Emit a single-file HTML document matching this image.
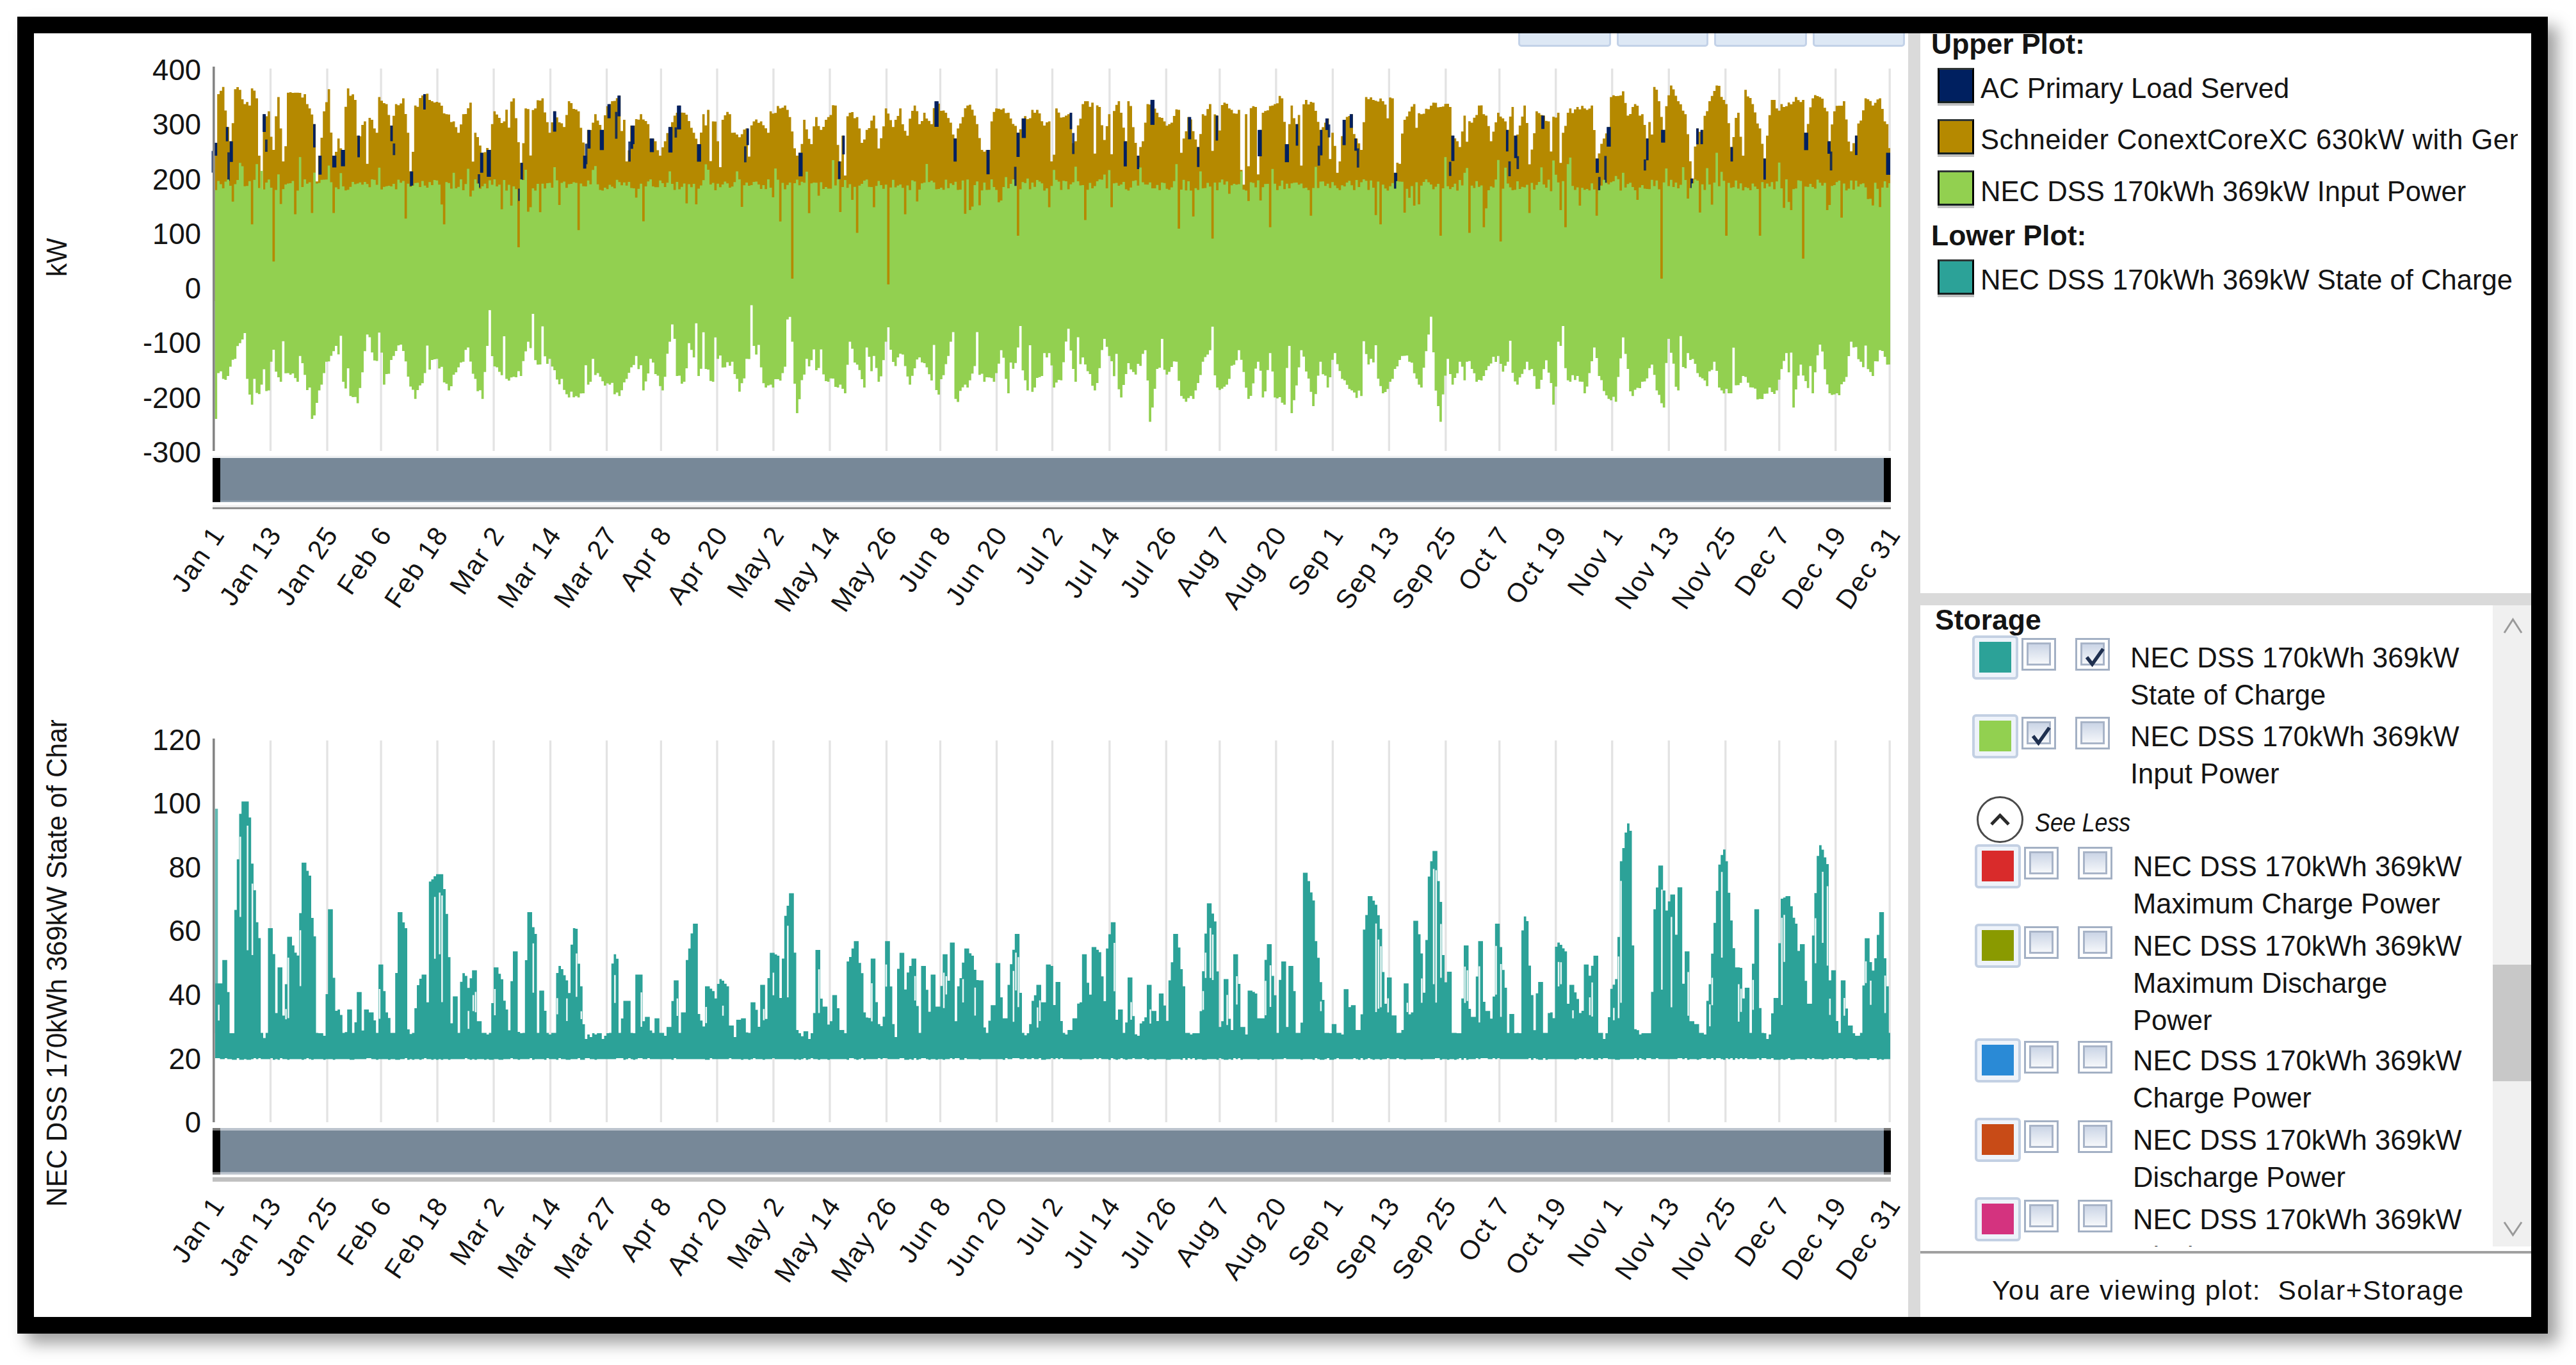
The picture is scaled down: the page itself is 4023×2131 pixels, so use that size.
<!DOCTYPE html>
<html><head><meta charset="utf-8"><style>
html,body{margin:0;padding:0;width:4023px;height:2131px;overflow:hidden;background:#fff;}
body{position:relative;font-family:"Liberation Sans", sans-serif;color:#141414;}
.frame{position:absolute;left:27px;top:26px;width:3900px;height:2004px;border:26px solid #000;background:transparent;box-shadow:15px 15px 24px rgba(0,0,0,0.38);overflow:hidden;}
.abs{position:absolute;}
.b{font-weight:bold;}
.btn{position:absolute;top:30px;height:43px;box-sizing:border-box;background:#dde8f5;border:3px solid #c3d2e8;border-radius:5px;}
.t{position:absolute;white-space:nowrap;font-size:43.6px;line-height:58px;}
.sw{position:absolute;box-sizing:border-box;width:57px;height:55px;border:3.7px solid #000;border-top-color:#2f3535;border-bottom-color:#152020;box-shadow:0 4px 0 #c0c0c0;}
.cb{position:absolute;box-sizing:border-box;width:54px;height:51px;border:3.5px solid #a3b0c4;background:#fff;}
.cb::after{content:"";position:absolute;z-index:0;left:4.5px;top:3.5px;width:32px;height:30px;border:3px solid #a8b4c8;background:linear-gradient(#cbd5e6,#f5f7fa);}
.swo{position:absolute;box-sizing:border-box;width:72px;height:69px;border:4px solid #c3d0e3;border-radius:6px;background:#eef3fa;}
.swo i{position:absolute;left:7px;top:6px;width:50px;height:48px;}
</style></head><body>
<svg width="4023" height="2131" style="position:absolute;left:0;top:0" font-family='"Liberation Sans", sans-serif'><rect x="420.9" y="107" width="3.3" height="597" fill="#e3e3e3"/><rect x="509.4" y="107" width="3.3" height="597" fill="#e3e3e3"/><rect x="593.4" y="107" width="3.3" height="597" fill="#e3e3e3"/><rect x="681.4" y="107" width="3.3" height="597" fill="#e3e3e3"/><rect x="769.4" y="107" width="3.3" height="597" fill="#e3e3e3"/><rect x="857.9" y="107" width="3.3" height="597" fill="#e3e3e3"/><rect x="945.9" y="107" width="3.3" height="597" fill="#e3e3e3"/><rect x="1030.7" y="107" width="3.3" height="597" fill="#e3e3e3"/><rect x="1118.3" y="107" width="3.3" height="597" fill="#e3e3e3"/><rect x="1206.3" y="107" width="3.3" height="597" fill="#e3e3e3"/><rect x="1294.3" y="107" width="3.3" height="597" fill="#e3e3e3"/><rect x="1382.8" y="107" width="3.3" height="597" fill="#e3e3e3"/><rect x="1466.8" y="107" width="3.3" height="597" fill="#e3e3e3"/><rect x="1554.8" y="107" width="3.3" height="597" fill="#e3e3e3"/><rect x="1641.8" y="107" width="3.3" height="597" fill="#e3e3e3"/><rect x="1731.2" y="107" width="3.3" height="597" fill="#e3e3e3"/><rect x="1819.6" y="107" width="3.3" height="597" fill="#e3e3e3"/><rect x="1903.2" y="107" width="3.3" height="597" fill="#e3e3e3"/><rect x="1991.2" y="107" width="3.3" height="597" fill="#e3e3e3"/><rect x="2079.7" y="107" width="3.3" height="597" fill="#e3e3e3"/><rect x="2167.7" y="107" width="3.3" height="597" fill="#e3e3e3"/><rect x="2256.2" y="107" width="3.3" height="597" fill="#e3e3e3"/><rect x="2340.1" y="107" width="3.3" height="597" fill="#e3e3e3"/><rect x="2428.1" y="107" width="3.3" height="597" fill="#e3e3e3"/><rect x="2516.1" y="107" width="3.3" height="597" fill="#e3e3e3"/><rect x="2604.6" y="107" width="3.3" height="597" fill="#e3e3e3"/><rect x="2693.1" y="107" width="3.3" height="597" fill="#e3e3e3"/><rect x="2777.1" y="107" width="3.3" height="597" fill="#e3e3e3"/><rect x="2865.1" y="107" width="3.3" height="597" fill="#e3e3e3"/><rect x="2949.5" y="107" width="3.3" height="597" fill="#e3e3e3"/><rect x="420.9" y="1156" width="3.3" height="596" fill="#e3e3e3"/><rect x="509.4" y="1156" width="3.3" height="596" fill="#e3e3e3"/><rect x="593.4" y="1156" width="3.3" height="596" fill="#e3e3e3"/><rect x="681.4" y="1156" width="3.3" height="596" fill="#e3e3e3"/><rect x="769.4" y="1156" width="3.3" height="596" fill="#e3e3e3"/><rect x="857.9" y="1156" width="3.3" height="596" fill="#e3e3e3"/><rect x="945.9" y="1156" width="3.3" height="596" fill="#e3e3e3"/><rect x="1030.7" y="1156" width="3.3" height="596" fill="#e3e3e3"/><rect x="1118.3" y="1156" width="3.3" height="596" fill="#e3e3e3"/><rect x="1206.3" y="1156" width="3.3" height="596" fill="#e3e3e3"/><rect x="1294.3" y="1156" width="3.3" height="596" fill="#e3e3e3"/><rect x="1382.8" y="1156" width="3.3" height="596" fill="#e3e3e3"/><rect x="1466.8" y="1156" width="3.3" height="596" fill="#e3e3e3"/><rect x="1554.8" y="1156" width="3.3" height="596" fill="#e3e3e3"/><rect x="1641.8" y="1156" width="3.3" height="596" fill="#e3e3e3"/><rect x="1731.2" y="1156" width="3.3" height="596" fill="#e3e3e3"/><rect x="1819.6" y="1156" width="3.3" height="596" fill="#e3e3e3"/><rect x="1903.2" y="1156" width="3.3" height="596" fill="#e3e3e3"/><rect x="1991.2" y="1156" width="3.3" height="596" fill="#e3e3e3"/><rect x="2079.7" y="1156" width="3.3" height="596" fill="#e3e3e3"/><rect x="2167.7" y="1156" width="3.3" height="596" fill="#e3e3e3"/><rect x="2256.2" y="1156" width="3.3" height="596" fill="#e3e3e3"/><rect x="2340.1" y="1156" width="3.3" height="596" fill="#e3e3e3"/><rect x="2428.1" y="1156" width="3.3" height="596" fill="#e3e3e3"/><rect x="2516.1" y="1156" width="3.3" height="596" fill="#e3e3e3"/><rect x="2604.6" y="1156" width="3.3" height="596" fill="#e3e3e3"/><rect x="2693.1" y="1156" width="3.3" height="596" fill="#e3e3e3"/><rect x="2777.1" y="1156" width="3.3" height="596" fill="#e3e3e3"/><rect x="2865.1" y="1156" width="3.3" height="596" fill="#e3e3e3"/><rect x="2949.5" y="1156" width="3.3" height="596" fill="#e3e3e3"/><polygon points="335.5,222.9 339.2,222.9 339.2,146.9 343.0,146.9 343.0,141.7 346.8,141.7 346.8,135.7 350.5,135.7 350.5,172.6 354.2,172.6 354.2,198.3 358.0,198.3 358.0,220.6 361.8,220.6 361.8,192.3 365.5,192.3 365.5,139.3 369.2,139.3 369.2,136.0 373.0,136.0 373.0,140.2 376.8,140.2 376.8,154.9 380.5,154.9 380.5,162.6 384.2,162.6 384.2,159.3 388.0,159.3 388.0,164.8 391.8,164.8 391.8,138.0 395.5,138.0 395.5,141.5 399.2,141.5 399.2,153.6 403.0,153.6 403.0,243.0 406.8,243.0 406.8,303.4 410.5,303.4 410.5,178.2 414.2,178.2 414.2,181.5 418.0,181.5 418.0,173.7 421.8,173.7 421.8,213.4 425.5,213.4 425.5,234.0 429.2,234.0 429.2,181.5 433.0,181.5 433.0,151.4 436.8,151.4 436.8,200.4 440.5,200.4 440.5,251.9 444.2,251.9 444.2,228.3 448.0,228.3 448.0,144.7 451.8,144.7 451.8,144.0 455.5,144.0 455.5,144.9 459.2,144.9 459.2,144.7 463.0,144.7 463.0,144.7 466.8,144.7 466.8,145.1 470.5,145.1 470.5,152.3 474.2,152.3 474.2,146.9 478.0,146.9 478.0,162.6 481.8,162.6 481.8,169.3 485.5,169.3 485.5,178.8 489.2,178.8 489.2,193.8 493.0,193.8 493.0,283.2 496.8,283.2 496.8,243.0 500.5,243.0 500.5,215.1 504.2,215.1 504.2,173.7 508.0,173.7 508.0,159.4 511.8,159.4 511.8,139.3 515.5,139.3 515.5,207.1 519.2,207.1 519.2,243.0 523.0,243.0 523.0,237.0 526.8,237.0 526.8,216.2 530.5,216.2 530.5,231.4 534.2,231.4 534.2,234.0 538.0,234.0 538.0,166.8 541.8,166.8 541.8,138.0 545.5,138.0 545.5,149.5 549.2,149.5 549.2,147.2 553.0,147.2 553.0,155.9 556.8,155.9 556.8,211.7 560.5,211.7 560.5,212.8 564.2,212.8 564.2,195.1 568.0,195.1 568.0,189.4 571.8,189.4 571.8,255.8 575.5,255.8 575.5,184.0 579.2,184.0 579.2,187.1 583.0,187.1 583.0,200.5 586.8,200.5 586.8,207.2 590.5,207.2 590.5,151.4 594.2,151.4 594.2,157.3 598.0,157.3 598.0,160.9 601.8,160.9 601.8,162.6 605.5,162.6 605.5,179.6 609.2,179.6 609.2,196.1 613.0,196.1 613.0,180.7 616.8,180.7 616.8,162.6 620.5,162.6 620.5,164.3 624.2,164.3 624.2,161.5 628.0,161.5 628.0,153.6 631.8,153.6 631.8,177.9 635.5,177.9 635.5,207.2 639.2,207.2 639.2,267.6 643.0,267.6 643.0,237.1 646.8,237.1 646.8,164.8 650.5,164.8 650.5,166.8 654.2,166.8 654.2,153.0 658.0,153.0 658.0,148.9 661.8,148.9 661.8,146.9 665.5,146.9 665.5,146.3 669.2,146.3 669.2,156.1 673.0,156.1 673.0,158.1 676.8,158.1 676.8,160.1 680.5,160.1 680.5,158.9 684.2,158.9 684.2,160.3 688.0,160.3 688.0,165.0 691.8,165.0 691.8,177.0 695.5,177.0 695.5,178.2 699.2,178.2 699.2,178.8 703.0,178.8 703.0,190.5 706.8,190.5 706.8,189.4 710.5,189.4 710.5,198.5 714.2,198.5 714.2,207.2 718.0,207.2 718.0,194.3 721.8,194.3 721.8,178.2 725.5,178.2 725.5,178.0 729.2,178.0 729.2,168.9 733.0,168.9 733.0,160.3 736.8,160.3 736.8,252.2 740.5,252.2 740.5,207.2 744.2,207.2 744.2,213.9 748.0,213.9 748.0,227.3 751.8,227.3 751.8,238.5 755.5,238.5 755.5,237.6 759.2,237.6 759.2,231.1 763.0,231.1 763.0,234.0 766.8,234.0 766.8,193.8 770.5,193.8 770.5,173.7 774.2,173.7 774.2,178.8 778.0,178.8 778.0,183.9 781.8,183.9 781.8,191.9 785.5,191.9 785.5,189.4 789.2,189.4 789.2,171.3 793.0,171.3 793.0,199.3 796.8,199.3 796.8,158.4 800.5,158.4 800.5,153.6 804.2,153.6 804.2,184.6 808.0,184.6 808.0,221.9 811.8,221.9 811.8,254.2 815.5,254.2 815.5,223.5 819.2,223.5 819.2,169.3 823.0,169.3 823.0,170.3 826.8,170.3 826.8,242.8 830.5,242.8 830.5,171.7 834.2,171.7 834.2,169.3 838.0,169.3 838.0,156.6 841.8,156.6 841.8,156.9 845.5,156.9 845.5,153.6 849.2,153.6 849.2,175.6 853.0,175.6 853.0,190.7 856.8,190.7 856.8,207.2 860.5,207.2 860.5,190.9 864.2,190.9 864.2,173.7 868.0,173.7 868.0,183.3 871.8,183.3 871.8,190.9 875.5,190.9 875.5,192.4 879.2,192.4 879.2,198.3 883.0,198.3 883.0,179.4 886.8,179.4 886.8,158.1 890.5,158.1 890.5,160.9 894.2,160.9 894.2,170.0 898.0,170.0 898.0,170.9 901.8,170.9 901.8,173.7 905.5,173.7 905.5,199.5 909.2,199.5 909.2,222.6 913.0,222.6 913.0,243.0 916.8,243.0 916.8,202.8 920.5,202.8 920.5,203.1 924.2,203.1 924.2,191.6 928.0,191.6 928.0,178.2 931.8,178.2 931.8,188.3 935.5,188.3 935.5,195.1 939.2,195.1 939.2,202.8 943.0,202.8 943.0,179.9 946.8,179.9 946.8,165.8 950.5,165.8 950.5,162.6 954.2,162.6 954.2,158.0 958.0,158.0 958.0,157.4 961.8,157.4 961.8,153.2 965.5,153.2 965.5,149.2 969.2,149.2 969.2,204.5 973.0,204.5 973.0,187.1 976.8,187.1 976.8,251.9 980.5,251.9 980.5,234.7 984.2,234.7 984.2,196.1 988.0,196.1 988.0,196.1 991.8,196.1 991.8,185.9 995.5,185.9 995.5,186.7 999.2,186.7 999.2,178.2 1003.0,178.2 1003.0,186.4 1006.8,186.4 1006.8,189.0 1010.5,189.0 1010.5,193.8 1014.2,193.8 1014.2,216.2 1018.0,216.2 1018.0,216.6 1021.8,216.6 1021.8,220.6 1025.5,220.6 1025.5,234.6 1029.2,234.6 1029.2,243.0 1033.0,243.0 1033.0,230.0 1036.8,230.0 1036.8,220.6 1040.5,220.6 1040.5,207.7 1044.2,207.7 1044.2,198.3 1048.0,198.3 1048.0,190.7 1051.8,190.7 1051.8,180.4 1055.5,180.4 1055.5,176.1 1059.2,176.1 1059.2,164.8 1063.0,164.8 1063.0,175.7 1066.8,175.7 1066.8,176.0 1070.5,176.0 1070.5,179.0 1074.2,179.0 1074.2,189.0 1078.0,189.0 1078.0,199.5 1081.8,199.5 1081.8,207.2 1085.5,207.2 1085.5,216.4 1089.2,216.4 1089.2,225.1 1093.0,225.1 1093.0,207.0 1096.8,207.0 1096.8,178.2 1100.5,178.2 1100.5,195.7 1104.2,195.7 1104.2,171.5 1108.0,171.5 1108.0,251.6 1111.8,251.6 1111.8,189.4 1115.5,189.4 1115.5,189.7 1119.2,189.7 1119.2,220.5 1123.0,220.5 1123.0,260.9 1126.8,260.9 1126.8,187.1 1130.5,187.1 1130.5,180.0 1134.2,180.0 1134.2,174.8 1138.0,174.8 1138.0,178.2 1141.8,178.2 1141.8,207.2 1145.5,207.2 1145.5,206.9 1149.2,206.9 1149.2,210.1 1153.0,210.1 1153.0,214.3 1156.8,214.3 1156.8,209.5 1160.5,209.5 1160.5,202.2 1164.2,202.2 1164.2,200.5 1168.0,200.5 1168.0,244.6 1171.8,244.6 1171.8,195.7 1175.5,195.7 1175.5,189.4 1179.2,189.4 1179.2,186.6 1183.0,186.6 1183.0,191.7 1186.8,191.7 1186.8,189.4 1190.5,189.4 1190.5,195.5 1194.2,195.5 1194.2,200.3 1198.0,200.3 1198.0,207.2 1201.8,207.2 1201.8,173.7 1205.5,173.7 1205.5,177.3 1209.2,177.3 1209.2,176.3 1213.0,176.3 1213.0,165.5 1216.8,165.5 1216.8,169.3 1220.5,169.3 1220.5,168.0 1224.2,168.0 1224.2,164.8 1228.0,164.8 1228.0,171.6 1231.8,171.6 1231.8,182.7 1235.5,182.7 1235.5,205.3 1239.2,205.3 1239.2,231.4 1243.0,231.4 1243.0,243.0 1246.8,243.0 1246.8,238.5 1250.5,238.5 1250.5,224.7 1254.2,224.7 1254.2,187.1 1258.0,187.1 1258.0,201.9 1261.8,201.9 1261.8,216.8 1265.5,216.8 1265.5,225.1 1269.2,225.1 1269.2,197.2 1273.0,197.2 1273.0,182.7 1276.8,182.7 1276.8,196.8 1280.5,196.8 1280.5,202.8 1284.2,202.8 1284.2,198.1 1288.0,198.1 1288.0,187.0 1291.8,187.0 1291.8,182.7 1295.5,182.7 1295.5,179.6 1299.2,179.6 1299.2,164.3 1303.0,164.3 1303.0,164.8 1306.8,164.8 1306.8,226.2 1310.5,226.2 1310.5,251.9 1314.2,251.9 1314.2,211.7 1318.0,211.7 1318.0,274.1 1321.8,274.1 1321.8,181.4 1325.5,181.4 1325.5,176.0 1329.2,176.0 1329.2,174.9 1333.0,174.9 1333.0,184.6 1336.8,184.6 1336.8,182.7 1340.5,182.7 1340.5,200.6 1344.2,200.6 1344.2,222.9 1348.0,222.9 1348.0,217.7 1351.8,217.7 1351.8,202.8 1355.5,202.8 1355.5,199.9 1359.2,199.9 1359.2,188.2 1363.0,188.2 1363.0,180.4 1366.8,180.4 1366.8,200.5 1370.5,200.5 1370.5,231.8 1374.2,231.8 1374.2,215.8 1378.0,215.8 1378.0,197.2 1381.8,197.2 1381.8,169.3 1385.5,169.3 1385.5,177.3 1389.2,177.3 1389.2,187.5 1393.0,187.5 1393.0,198.3 1396.8,198.3 1396.8,186.9 1400.5,186.9 1400.5,180.9 1404.2,180.9 1404.2,169.3 1408.0,169.3 1408.0,193.9 1411.8,193.9 1411.8,204.3 1415.5,204.3 1415.5,211.7 1419.2,211.7 1419.2,185.2 1423.0,185.2 1423.0,173.0 1426.8,173.0 1426.8,164.8 1430.5,164.8 1430.5,173.5 1434.2,173.5 1434.2,193.8 1438.0,193.8 1438.0,189.0 1441.8,189.0 1441.8,176.0 1445.5,176.0 1445.5,184.9 1449.2,184.9 1449.2,188.7 1453.0,188.7 1453.0,193.8 1456.8,193.8 1456.8,168.7 1460.5,168.7 1460.5,158.1 1464.2,158.1 1464.2,161.8 1468.0,161.8 1468.0,172.9 1471.8,172.9 1471.8,172.5 1475.5,172.5 1475.5,176.0 1479.2,176.0 1479.2,184.2 1483.0,184.2 1483.0,191.6 1486.8,191.6 1486.8,210.0 1490.5,210.0 1490.5,216.2 1494.2,216.2 1494.2,200.5 1498.0,200.5 1498.0,192.8 1501.8,192.8 1501.8,182.7 1505.5,182.7 1505.5,169.0 1509.2,169.0 1509.2,164.8 1513.0,164.8 1513.0,163.5 1516.8,163.5 1516.8,171.2 1520.5,171.2 1520.5,180.4 1524.2,180.4 1524.2,193.8 1528.0,193.8 1528.0,215.4 1531.8,215.4 1531.8,234.0 1535.5,234.0 1535.5,236.8 1539.2,236.8 1539.2,234.2 1543.0,234.2 1543.0,234.0 1546.8,234.0 1546.8,189.4 1550.5,189.4 1550.5,174.7 1554.2,174.7 1554.2,169.3 1558.0,169.3 1558.0,169.8 1561.8,169.8 1561.8,170.9 1565.5,170.9 1565.5,169.3 1569.2,169.3 1569.2,176.4 1573.0,176.4 1573.0,176.0 1576.8,176.0 1576.8,185.0 1580.5,185.0 1580.5,193.5 1584.2,193.5 1584.2,196.4 1588.0,196.4 1588.0,207.2 1591.8,207.2 1591.8,201.7 1595.5,201.7 1595.5,184.9 1599.2,184.9 1599.2,181.2 1603.0,181.2 1603.0,186.0 1606.8,186.0 1606.8,184.4 1610.5,184.4 1610.5,171.5 1614.2,171.5 1614.2,176.1 1618.0,176.1 1618.0,171.5 1621.8,171.5 1621.8,177.0 1625.5,177.0 1625.5,189.3 1629.2,189.3 1629.2,196.1 1633.0,196.1 1633.0,190.9 1636.8,190.9 1636.8,189.4 1640.5,189.4 1640.5,251.9 1644.2,251.9 1644.2,241.4 1648.0,241.4 1648.0,169.3 1651.8,169.3 1651.8,175.7 1655.5,175.7 1655.5,183.6 1659.2,183.6 1659.2,182.7 1663.0,182.7 1663.0,180.6 1666.8,180.6 1666.8,178.3 1670.5,178.3 1670.5,176.0 1674.2,176.0 1674.2,223.6 1678.0,223.6 1678.0,220.6 1681.8,220.6 1681.8,195.7 1685.5,195.7 1685.5,185.2 1689.2,185.2 1689.2,162.6 1693.0,162.6 1693.0,157.9 1696.8,157.9 1696.8,158.0 1700.5,158.0 1700.5,166.8 1704.2,166.8 1704.2,160.3 1708.0,160.3 1708.0,239.7 1711.8,239.7 1711.8,164.5 1715.5,164.5 1715.5,167.0 1719.2,167.0 1719.2,195.6 1723.0,195.6 1723.0,218.4 1726.8,218.4 1726.8,197.0 1730.5,197.0 1730.5,178.2 1734.2,178.2 1734.2,240.7 1738.0,240.7 1738.0,173.2 1741.8,173.2 1741.8,163.7 1745.5,163.7 1745.5,158.1 1749.2,158.1 1749.2,176.0 1753.0,176.0 1753.0,199.3 1756.8,199.3 1756.8,220.6 1760.5,220.6 1760.5,158.1 1764.2,158.1 1764.2,165.4 1768.0,165.4 1768.0,198.6 1771.8,198.6 1771.8,223.1 1775.5,223.1 1775.5,243.0 1779.2,243.0 1779.2,229.6 1783.0,229.6 1783.0,220.6 1786.8,220.6 1786.8,191.6 1790.5,191.6 1790.5,162.6 1794.2,162.6 1794.2,163.2 1798.0,163.2 1798.0,155.9 1801.8,155.9 1801.8,169.4 1805.5,169.4 1805.5,176.0 1809.2,176.0 1809.2,182.9 1813.0,182.9 1813.0,184.0 1816.8,184.0 1816.8,189.4 1820.5,189.4 1820.5,196.3 1824.2,196.3 1824.2,193.8 1828.0,193.8 1828.0,191.6 1831.8,191.6 1831.8,181.0 1835.5,181.0 1835.5,170.7 1839.2,170.7 1839.2,171.5 1843.0,171.5 1843.0,238.6 1846.8,238.6 1846.8,216.2 1850.5,216.2 1850.5,205.0 1854.2,205.0 1854.2,182.7 1858.0,182.7 1858.0,186.4 1861.8,186.4 1861.8,204.8 1865.5,204.8 1865.5,217.8 1869.2,217.8 1869.2,229.6 1873.0,229.6 1873.0,209.3 1876.8,209.3 1876.8,178.2 1880.5,178.2 1880.5,180.4 1884.2,180.4 1884.2,170.3 1888.0,170.3 1888.0,162.6 1891.8,162.6 1891.8,235.5 1895.5,235.5 1895.5,178.6 1899.2,178.6 1899.2,180.4 1903.0,180.4 1903.0,203.8 1906.8,203.8 1906.8,164.0 1910.5,164.0 1910.5,160.3 1914.2,160.3 1914.2,162.0 1918.0,162.0 1918.0,169.3 1921.8,169.3 1921.8,171.5 1925.5,171.5 1925.5,177.1 1929.2,177.1 1929.2,177.4 1933.0,177.4 1933.0,171.5 1936.8,171.5 1936.8,265.3 1940.5,265.3 1940.5,288.3 1944.2,288.3 1944.2,178.2 1948.0,178.2 1948.0,259.6 1951.8,259.6 1951.8,168.8 1955.5,168.8 1955.5,165.8 1959.2,165.8 1959.2,167.0 1963.0,167.0 1963.0,272.3 1966.8,272.3 1966.8,202.8 1970.5,202.8 1970.5,176.0 1974.2,176.0 1974.2,173.3 1978.0,173.3 1978.0,172.3 1981.8,172.3 1981.8,165.4 1985.5,165.4 1985.5,164.8 1989.2,164.8 1989.2,162.5 1993.0,162.5 1993.0,161.2 1996.8,161.2 1996.8,149.7 2000.5,149.7 2000.5,153.6 2004.2,153.6 2004.2,190.2 2008.0,190.2 2008.0,225.1 2011.8,225.1 2011.8,193.8 2015.5,193.8 2015.5,164.8 2019.2,164.8 2019.2,184.6 2023.0,184.6 2023.0,193.8 2026.8,193.8 2026.8,179.4 2030.5,179.4 2030.5,258.4 2034.2,258.4 2034.2,162.7 2038.0,162.7 2038.0,155.9 2041.8,155.9 2041.8,163.1 2045.5,163.1 2045.5,159.0 2049.2,159.0 2049.2,160.3 2053.0,160.3 2053.0,173.0 2056.8,173.0 2056.8,190.3 2060.5,190.3 2060.5,202.8 2064.2,202.8 2064.2,198.6 2068.0,198.6 2068.0,191.4 2071.8,191.4 2071.8,184.9 2075.5,184.9 2075.5,248.2 2079.2,248.2 2079.2,207.2 2083.0,207.2 2083.0,227.8 2086.8,227.8 2086.8,269.8 2090.5,269.8 2090.5,252.0 2094.2,252.0 2094.2,212.4 2098.0,212.4 2098.0,187.1 2101.8,187.1 2101.8,182.6 2105.5,182.6 2105.5,180.9 2109.2,180.9 2109.2,178.2 2113.0,178.2 2113.0,209.3 2116.8,209.3 2116.8,216.2 2120.5,216.2 2120.5,223.7 2124.2,223.7 2124.2,234.0 2128.0,234.0 2128.0,190.7 2131.8,190.7 2131.8,151.4 2135.5,151.4 2135.5,154.8 2139.2,154.8 2139.2,152.0 2143.0,152.0 2143.0,155.9 2146.8,155.9 2146.8,157.2 2150.5,157.2 2150.5,158.5 2154.2,158.5 2154.2,153.7 2158.0,153.7 2158.0,158.1 2161.8,158.1 2161.8,163.2 2165.5,163.2 2165.5,184.7 2169.2,184.7 2169.2,152.2 2173.0,152.2 2173.0,153.6 2176.8,153.6 2176.8,269.8 2180.5,269.8 2180.5,254.1 2184.2,254.1 2184.2,255.7 2188.0,255.7 2188.0,208.5 2191.8,208.5 2191.8,187.1 2195.5,187.1 2195.5,181.8 2199.2,181.8 2199.2,174.1 2203.0,174.1 2203.0,166.6 2206.8,166.6 2206.8,162.6 2210.5,162.6 2210.5,199.6 2214.2,199.6 2214.2,176.7 2218.0,176.7 2218.0,178.2 2221.8,178.2 2221.8,177.6 2225.5,177.6 2225.5,169.7 2229.2,169.7 2229.2,170.6 2233.0,170.6 2233.0,165.0 2236.8,165.0 2236.8,160.3 2240.5,160.3 2240.5,160.6 2244.2,160.6 2244.2,167.5 2248.0,167.5 2248.0,167.0 2251.8,167.0 2251.8,166.2 2255.5,166.2 2255.5,162.2 2259.2,162.2 2259.2,162.0 2263.0,162.0 2263.0,167.0 2266.8,167.0 2266.8,211.7 2270.5,211.7 2270.5,215.9 2274.2,215.9 2274.2,220.6 2278.0,220.6 2278.0,229.6 2281.8,229.6 2281.8,205.2 2285.5,205.2 2285.5,180.4 2289.2,180.4 2289.2,221.3 2293.0,221.3 2293.0,189.2 2296.8,189.2 2296.8,191.6 2300.5,191.6 2300.5,183.8 2304.2,183.8 2304.2,179.5 2308.0,179.5 2308.0,164.8 2311.8,164.8 2311.8,164.6 2315.5,164.6 2315.5,178.2 2319.2,178.2 2319.2,180.4 2323.0,180.4 2323.0,196.8 2326.8,196.8 2326.8,220.6 2330.5,220.6 2330.5,205.4 2334.2,205.4 2334.2,191.1 2338.0,191.1 2338.0,176.0 2341.8,176.0 2341.8,181.9 2345.5,181.9 2345.5,184.8 2349.2,184.8 2349.2,189.4 2353.0,189.4 2353.0,202.8 2356.8,202.8 2356.8,182.0 2360.5,182.0 2360.5,167.0 2364.2,167.0 2364.2,211.7 2368.0,211.7 2368.0,210.0 2371.8,210.0 2371.8,196.1 2375.5,196.1 2375.5,182.0 2379.2,182.0 2379.2,164.8 2383.0,164.8 2383.0,191.9 2386.8,191.9 2386.8,256.4 2390.5,256.4 2390.5,233.6 2394.2,233.6 2394.2,207.9 2398.0,207.9 2398.0,173.7 2401.8,173.7 2401.8,176.4 2405.5,176.4 2405.5,179.5 2409.2,179.5 2409.2,180.4 2413.0,180.4 2413.0,188.8 2416.8,188.8 2416.8,189.4 2420.5,189.4 2420.5,236.4 2424.2,236.4 2424.2,182.3 2428.0,182.3 2428.0,183.6 2431.8,183.6 2431.8,176.0 2435.5,176.0 2435.5,254.2 2439.2,254.2 2439.2,207.2 2443.0,207.2 2443.0,196.6 2446.8,196.6 2446.8,176.0 2450.5,176.0 2450.5,169.2 2454.2,169.2 2454.2,176.5 2458.0,176.5 2458.0,170.8 2461.8,170.8 2461.8,167.0 2465.5,167.0 2465.5,170.7 2469.2,170.7 2469.2,165.3 2473.0,165.3 2473.0,169.3 2476.8,169.3 2476.8,171.4 2480.5,171.4 2480.5,169.5 2484.2,169.5 2484.2,164.8 2488.0,164.8 2488.0,202.9 2491.8,202.9 2491.8,247.5 2495.5,247.5 2495.5,239.4 2499.2,239.4 2499.2,224.6 2503.0,224.6 2503.0,216.2 2506.8,216.2 2506.8,208.3 2510.5,208.3 2510.5,198.3 2514.2,198.3 2514.2,151.4 2518.0,151.4 2518.0,148.8 2521.8,148.8 2521.8,150.0 2525.5,150.0 2525.5,149.8 2529.2,149.8 2529.2,148.9 2533.0,148.9 2533.0,142.4 2536.8,142.4 2536.8,160.8 2540.5,160.8 2540.5,180.4 2544.2,180.4 2544.2,178.0 2548.0,178.0 2548.0,167.0 2551.8,167.0 2551.8,162.6 2555.5,162.6 2555.5,165.0 2559.2,165.0 2559.2,180.4 2563.0,180.4 2563.0,178.2 2566.8,178.2 2566.8,195.0 2570.5,195.0 2570.5,216.2 2574.2,216.2 2574.2,190.4 2578.0,190.4 2578.0,210.0 2581.8,210.0 2581.8,135.7 2585.5,135.7 2585.5,140.0 2589.2,140.0 2589.2,158.1 2593.0,158.1 2593.0,182.4 2596.8,182.4 2596.8,202.8 2600.5,202.8 2600.5,165.7 2604.2,165.7 2604.2,148.7 2608.0,148.7 2608.0,133.5 2611.8,133.5 2611.8,139.4 2615.5,139.4 2615.5,149.4 2619.2,149.4 2619.2,158.1 2623.0,158.1 2623.0,162.8 2626.8,162.8 2626.8,172.8 2630.5,172.8 2630.5,178.2 2634.2,178.2 2634.2,209.6 2638.0,209.6 2638.0,251.7 2641.8,251.7 2641.8,278.7 2645.5,278.7 2645.5,228.8 2649.2,228.8 2649.2,200.5 2653.0,200.5 2653.0,205.7 2656.8,205.7 2656.8,202.8 2660.5,202.8 2660.5,180.7 2664.2,180.7 2664.2,173.5 2668.0,173.5 2668.0,158.1 2671.8,158.1 2671.8,149.7 2675.5,149.7 2675.5,142.0 2679.2,142.0 2679.2,133.5 2683.0,133.5 2683.0,134.0 2686.8,134.0 2686.8,151.2 2690.5,151.2 2690.5,156.0 2694.2,156.0 2694.2,162.6 2698.0,162.6 2698.0,192.3 2701.8,192.3 2701.8,229.6 2705.5,229.6 2705.5,214.1 2709.2,214.1 2709.2,183.9 2713.0,183.9 2713.0,176.0 2716.8,176.0 2716.8,213.4 2720.5,213.4 2720.5,243.0 2724.2,243.0 2724.2,140.2 2728.0,140.2 2728.0,150.4 2731.8,150.4 2731.8,153.1 2735.5,153.1 2735.5,162.6 2739.2,162.6 2739.2,175.6 2743.0,175.6 2743.0,192.8 2746.8,192.8 2746.8,200.5 2750.5,200.5 2750.5,224.6 2754.2,224.6 2754.2,247.5 2758.0,247.5 2758.0,211.8 2761.8,211.8 2761.8,179.7 2765.5,179.7 2765.5,155.9 2769.2,155.9 2769.2,156.0 2773.0,156.0 2773.0,169.3 2776.8,169.3 2776.8,172.8 2780.5,172.8 2780.5,162.6 2784.2,162.6 2784.2,167.0 2788.0,167.0 2788.0,165.8 2791.8,165.8 2791.8,160.0 2795.5,160.0 2795.5,162.8 2799.2,162.8 2799.2,158.7 2803.0,158.7 2803.0,151.4 2806.8,151.4 2806.8,156.3 2810.5,156.3 2810.5,159.3 2814.2,159.3 2814.2,155.9 2818.0,155.9 2818.0,207.2 2821.8,207.2 2821.8,193.4 2825.5,193.4 2825.5,167.5 2829.2,167.5 2829.2,153.6 2833.0,153.6 2833.0,148.6 2836.8,148.6 2836.8,149.9 2840.5,149.9 2840.5,151.4 2844.2,151.4 2844.2,154.1 2848.0,154.1 2848.0,168.2 2851.8,168.2 2851.8,173.7 2855.5,173.7 2855.5,220.6 2859.2,220.6 2859.2,194.2 2863.0,194.2 2863.0,173.7 2866.8,173.7 2866.8,165.2 2870.5,165.2 2870.5,165.1 2874.2,165.1 2874.2,165.1 2878.0,165.1 2878.0,158.1 2881.8,158.1 2881.8,186.4 2885.5,186.4 2885.5,221.0 2889.2,221.0 2889.2,236.3 2893.0,236.3 2893.0,223.4 2896.8,223.4 2896.8,211.7 2900.5,211.7 2900.5,192.8 2904.2,192.8 2904.2,188.3 2908.0,188.3 2908.0,172.2 2911.8,172.2 2911.8,153.6 2915.5,153.6 2915.5,155.0 2919.2,155.0 2919.2,157.8 2923.0,157.8 2923.0,164.8 2926.8,164.8 2926.8,160.5 2930.5,160.5 2930.5,155.2 2934.2,155.2 2934.2,153.6 2938.0,153.6 2938.0,170.1 2941.8,170.1 2941.8,189.5 2945.5,189.5 2945.5,193.8 2949.2,193.8 2949.2,231.3 2952.0,231.3 2952.0,470.0 335.5,470.0" fill="#b58900"/>
<rect x="334.3" y="222.9" width="4.9" height="20.2" fill="#002060"/>
<rect x="330.5" y="235.6" width="3.8" height="33.9" fill="#002060" opacity="0.85"/>
<rect x="352.7" y="198.3" width="3.8" height="22.3" fill="#002060"/>
<rect x="358.8" y="220.6" width="4.9" height="32.2" fill="#002060"/>
<rect x="355.1" y="237.8" width="3.8" height="44.6" fill="#002060" opacity="0.85"/>
<rect x="410.2" y="178.2" width="4.9" height="27.8" fill="#002060"/>
<rect x="414.0" y="217.8" width="3.8" height="19.2" fill="#002060" opacity="0.85"/>
<rect x="489.0" y="193.8" width="3.8" height="36.4" fill="#002060"/>
<rect x="497.4" y="243.0" width="4.9" height="29.6" fill="#002060"/>
<rect x="518.9" y="243.0" width="6.4" height="18.4" fill="#002060"/>
<rect x="532.4" y="234.0" width="6.4" height="25.6" fill="#002060"/>
<rect x="558.2" y="211.7" width="3.8" height="33.8" fill="#002060"/>
<rect x="609.6" y="196.1" width="3.8" height="24.3" fill="#002060"/>
<rect x="613.4" y="224.0" width="3.8" height="18.2" fill="#002060" opacity="0.85"/>
<rect x="640.3" y="267.6" width="4.9" height="22.9" fill="#002060"/>
<rect x="644.1" y="297.9" width="3.8" height="33.3" fill="#002060" opacity="0.85"/>
<rect x="661.0" y="146.9" width="3.8" height="24.1" fill="#002060"/>
<rect x="749.8" y="238.5" width="4.9" height="31.2" fill="#002060"/>
<rect x="746.1" y="272.0" width="3.8" height="20.9" fill="#002060" opacity="0.85"/>
<rect x="760.2" y="234.0" width="6.4" height="42.0" fill="#002060"/>
<rect x="812.9" y="254.2" width="3.8" height="31.6" fill="#002060"/>
<rect x="809.2" y="294.5" width="3.8" height="19.1" fill="#002060" opacity="0.85"/>
<rect x="863.8" y="173.7" width="4.9" height="31.8" fill="#002060"/>
<rect x="910.7" y="243.0" width="4.9" height="20.2" fill="#002060"/>
<rect x="917.4" y="202.8" width="4.9" height="29.1" fill="#002060"/>
<rect x="913.6" y="224.3" width="3.8" height="32.1" fill="#002060" opacity="0.85"/>
<rect x="936.7" y="202.8" width="6.4" height="31.5" fill="#002060"/>
<rect x="948.7" y="162.6" width="4.9" height="22.0" fill="#002060"/>
<rect x="964.3" y="149.2" width="4.9" height="32.4" fill="#002060"/>
<rect x="960.5" y="174.7" width="3.8" height="41.9" fill="#002060" opacity="0.85"/>
<rect x="985.0" y="196.1" width="3.8" height="36.2" fill="#002060"/>
<rect x="981.2" y="220.9" width="3.8" height="31.4" fill="#002060" opacity="0.85"/>
<rect x="987.1" y="196.1" width="3.8" height="28.9" fill="#002060"/>
<rect x="1014.8" y="216.2" width="6.4" height="21.3" fill="#002060"/>
<rect x="1043.8" y="198.3" width="6.4" height="39.8" fill="#002060"/>
<rect x="1057.2" y="164.8" width="6.4" height="37.3" fill="#002060"/>
<rect x="1053.5" y="198.8" width="3.8" height="16.0" fill="#002060" opacity="0.85"/>
<rect x="1088.5" y="225.1" width="6.4" height="27.3" fill="#002060"/>
<rect x="1165.8" y="200.5" width="3.8" height="26.1" fill="#002060"/>
<rect x="1162.0" y="228.4" width="3.8" height="25.0" fill="#002060" opacity="0.85"/>
<rect x="1247.1" y="238.5" width="6.4" height="36.8" fill="#002060"/>
<rect x="1308.8" y="251.9" width="3.8" height="27.7" fill="#002060"/>
<rect x="1315.5" y="211.7" width="3.8" height="29.3" fill="#002060"/>
<rect x="1459.4" y="158.1" width="6.4" height="39.9" fill="#002060"/>
<rect x="1489.2" y="216.2" width="4.9" height="36.0" fill="#002060"/>
<rect x="1540.6" y="234.0" width="4.9" height="38.1" fill="#002060"/>
<rect x="1587.5" y="207.2" width="4.9" height="37.8" fill="#002060"/>
<rect x="1583.7" y="260.4" width="3.8" height="30.8" fill="#002060" opacity="0.85"/>
<rect x="1595.7" y="184.9" width="6.4" height="30.5" fill="#002060"/>
<rect x="1670.6" y="176.0" width="3.8" height="25.7" fill="#002060"/>
<rect x="1674.3" y="207.6" width="3.8" height="32.9" fill="#002060" opacity="0.85"/>
<rect x="1754.9" y="220.6" width="4.9" height="39.2" fill="#002060"/>
<rect x="1775.6" y="243.0" width="3.8" height="21.0" fill="#002060"/>
<rect x="1796.6" y="155.9" width="6.4" height="39.0" fill="#002060"/>
<rect x="1855.4" y="182.7" width="4.9" height="34.7" fill="#002060"/>
<rect x="1869.4" y="229.6" width="3.8" height="31.1" fill="#002060"/>
<rect x="1898.5" y="180.4" width="3.8" height="39.1" fill="#002060"/>
<rect x="1964.2" y="202.8" width="6.4" height="41.2" fill="#002060"/>
<rect x="2006.6" y="225.1" width="6.4" height="28.1" fill="#002060"/>
<rect x="2023.6" y="193.8" width="3.8" height="33.6" fill="#002060"/>
<rect x="2061.5" y="202.8" width="3.8" height="39.7" fill="#002060"/>
<rect x="2057.8" y="227.5" width="3.8" height="31.1" fill="#002060" opacity="0.85"/>
<rect x="2069.9" y="184.9" width="4.9" height="18.0" fill="#002060"/>
<rect x="2073.7" y="194.3" width="3.8" height="20.2" fill="#002060" opacity="0.85"/>
<rect x="2096.7" y="187.1" width="4.9" height="39.5" fill="#002060"/>
<rect x="2107.9" y="178.2" width="4.9" height="21.4" fill="#002060"/>
<rect x="2115.2" y="216.2" width="3.8" height="19.1" fill="#002060"/>
<rect x="2118.9" y="231.6" width="3.8" height="30.0" fill="#002060" opacity="0.85"/>
<rect x="2177.2" y="269.8" width="4.9" height="39.1" fill="#002060"/>
<rect x="2173.4" y="297.0" width="3.8" height="40.1" fill="#002060" opacity="0.85"/>
<rect x="2266.5" y="211.7" width="4.9" height="39.6" fill="#002060"/>
<rect x="2262.8" y="252.6" width="3.8" height="22.1" fill="#002060" opacity="0.85"/>
<rect x="2351.9" y="202.8" width="3.8" height="33.6" fill="#002060"/>
<rect x="2355.6" y="251.9" width="3.8" height="23.2" fill="#002060" opacity="0.85"/>
<rect x="2364.7" y="211.7" width="4.9" height="35.1" fill="#002060"/>
<rect x="2368.4" y="243.8" width="3.8" height="20.1" fill="#002060" opacity="0.85"/>
<rect x="2407.1" y="180.4" width="4.9" height="20.9" fill="#002060"/>
<rect x="2492.0" y="247.5" width="4.9" height="22.3" fill="#002060"/>
<rect x="2495.8" y="276.3" width="3.8" height="26.2" fill="#002060" opacity="0.85"/>
<rect x="2509.2" y="198.3" width="6.4" height="30.6" fill="#002060"/>
<rect x="2505.4" y="243.5" width="3.8" height="41.9" fill="#002060" opacity="0.85"/>
<rect x="2570.8" y="216.2" width="3.8" height="34.0" fill="#002060"/>
<rect x="2567.0" y="248.9" width="3.8" height="17.3" fill="#002060" opacity="0.85"/>
<rect x="2594.1" y="202.8" width="6.4" height="19.8" fill="#002060"/>
<rect x="2640.1" y="278.7" width="3.8" height="32.4" fill="#002060"/>
<rect x="2643.8" y="308.6" width="3.8" height="32.1" fill="#002060" opacity="0.85"/>
<rect x="2649.0" y="200.5" width="3.8" height="24.8" fill="#002060"/>
<rect x="2655.7" y="202.8" width="3.8" height="22.3" fill="#002060"/>
<rect x="2702.6" y="229.6" width="3.8" height="22.5" fill="#002060"/>
<rect x="2754.0" y="247.5" width="3.8" height="32.9" fill="#002060"/>
<rect x="2817.5" y="207.2" width="6.4" height="27.2" fill="#002060"/>
<rect x="2854.0" y="220.6" width="4.9" height="19.4" fill="#002060"/>
<rect x="2857.7" y="236.6" width="3.8" height="29.5" fill="#002060" opacity="0.85"/>
<rect x="2897.0" y="211.7" width="3.8" height="30.4" fill="#002060"/>
<rect x="2945.6" y="238.5" width="6.4" height="34.4" fill="#002060"/>
<polygon points="335.5,296.8 339.2,296.8 339.2,282.6 343.0,282.6 343.0,287.6 346.8,287.6 346.8,293.9 350.5,293.9 350.5,283.6 354.2,283.6 354.2,280.3 358.0,280.3 358.0,290.0 361.8,290.0 361.8,314.8 365.5,314.8 365.5,287.6 369.2,287.6 369.2,281.0 373.0,281.0 373.0,254.2 376.8,254.2 376.8,259.4 380.5,259.4 380.5,290.8 384.2,290.8 384.2,290.3 388.0,290.3 388.0,282.8 391.8,282.8 391.8,350.2 395.5,350.2 395.5,280.8 399.2,280.8 399.2,256.3 403.0,256.3 403.0,293.4 406.8,293.4 406.8,266.8 410.5,266.8 410.5,295.7 414.2,295.7 414.2,285.0 418.0,285.0 418.0,280.3 421.8,280.3 421.8,292.9 425.5,292.9 425.5,408.3 429.2,408.3 429.2,296.5 433.0,296.5 433.0,272.3 436.8,272.3 436.8,318.4 440.5,318.4 440.5,295.2 444.2,295.2 444.2,288.0 448.0,288.0 448.0,286.5 451.8,286.5 451.8,285.9 455.5,285.9 455.5,282.6 459.2,282.6 459.2,334.6 463.0,334.6 463.0,297.5 466.8,297.5 466.8,245.2 470.5,245.2 470.5,292.1 474.2,292.1 474.2,280.0 478.0,280.0 478.0,286.7 481.8,286.7 481.8,284.5 485.5,284.5 485.5,332.4 489.2,332.4 489.2,269.6 493.0,269.6 493.0,286.6 496.8,286.6 496.8,285.5 500.5,285.5 500.5,280.7 504.2,280.7 504.2,280.4 508.0,280.4 508.0,280.2 511.8,280.2 511.8,258.6 515.5,258.6 515.5,284.4 519.2,284.4 519.2,332.4 523.0,332.4 523.0,292.5 526.8,292.5 526.8,295.3 530.5,295.3 530.5,270.3 534.2,270.3 534.2,291.0 538.0,291.0 538.0,297.2 541.8,297.2 541.8,296.2 545.5,296.2 545.5,291.7 549.2,291.7 549.2,283.9 553.0,283.9 553.0,287.4 556.8,287.4 556.8,286.6 560.5,286.6 560.5,284.7 564.2,284.7 564.2,288.2 568.0,288.2 568.0,284.0 571.8,284.0 571.8,287.3 575.5,287.3 575.5,292.3 579.2,292.3 579.2,280.1 583.0,280.1 583.0,280.8 586.8,280.8 586.8,288.6 590.5,288.6 590.5,261.8 594.2,261.8 594.2,295.7 598.0,295.7 598.0,291.7 601.8,291.7 601.8,290.7 605.5,290.7 605.5,290.0 609.2,290.0 609.2,291.0 613.0,291.0 613.0,287.1 616.8,287.1 616.8,295.5 620.5,295.5 620.5,280.4 624.2,280.4 624.2,285.2 628.0,285.2 628.0,282.4 631.8,282.4 631.8,341.3 635.5,341.3 635.5,286.8 639.2,286.8 639.2,291.4 643.0,291.4 643.0,289.8 646.8,289.8 646.8,285.7 650.5,285.7 650.5,285.3 654.2,285.3 654.2,292.0 658.0,292.0 658.0,282.5 661.8,282.5 661.8,289.8 665.5,289.8 665.5,293.1 669.2,293.1 669.2,284.2 673.0,284.2 673.0,288.9 676.8,288.9 676.8,280.9 680.5,280.9 680.5,281.7 684.2,281.7 684.2,288.3 688.0,288.3 688.0,319.2 691.8,319.2 691.8,350.2 695.5,350.2 695.5,284.2 699.2,284.2 699.2,285.7 703.0,285.7 703.0,294.6 706.8,294.6 706.8,269.8 710.5,269.8 710.5,294.1 714.2,294.1 714.2,291.7 718.0,291.7 718.0,279.9 721.8,279.9 721.8,297.1 725.5,297.1 725.5,287.2 729.2,287.2 729.2,263.6 733.0,263.6 733.0,306.8 736.8,306.8 736.8,297.6 740.5,297.6 740.5,280.1 744.2,280.1 744.2,286.4 748.0,286.4 748.0,294.8 751.8,294.8 751.8,290.8 755.5,290.8 755.5,286.7 759.2,286.7 759.2,294.1 763.0,294.1 763.0,281.6 766.8,281.6 766.8,288.5 770.5,288.5 770.5,280.0 774.2,280.0 774.2,290.9 778.0,290.9 778.0,288.3 781.8,288.3 781.8,326.8 785.5,326.8 785.5,281.1 789.2,281.1 789.2,297.6 793.0,297.6 793.0,288.4 796.8,288.4 796.8,321.1 800.5,321.1 800.5,290.9 804.2,290.9 804.2,295.2 808.0,295.2 808.0,386.0 811.8,386.0 811.8,280.1 815.5,280.1 815.5,281.0 819.2,281.0 819.2,265.0 823.0,265.0 823.0,330.4 826.8,330.4 826.8,323.4 830.5,323.4 830.5,294.1 834.2,294.1 834.2,297.4 838.0,297.4 838.0,286.9 841.8,286.9 841.8,331.2 845.5,331.2 845.5,286.7 849.2,286.7 849.2,294.3 853.0,294.3 853.0,286.0 856.8,286.0 856.8,285.5 860.5,285.5 860.5,293.0 864.2,293.0 864.2,260.9 868.0,260.9 868.0,281.6 871.8,281.6 871.8,320.0 875.5,320.0 875.5,285.5 879.2,285.5 879.2,283.4 883.0,283.4 883.0,293.2 886.8,293.2 886.8,287.4 890.5,287.4 890.5,287.0 894.2,287.0 894.2,284.6 898.0,284.6 898.0,285.5 901.8,285.5 901.8,359.2 905.5,359.2 905.5,286.5 909.2,286.5 909.2,290.8 913.0,290.8 913.0,291.0 916.8,291.0 916.8,281.7 920.5,281.7 920.5,287.8 924.2,287.8 924.2,265.3 928.0,265.3 928.0,259.3 931.8,259.3 931.8,287.7 935.5,287.7 935.5,296.4 939.2,296.4 939.2,297.5 943.0,297.5 943.0,292.9 946.8,292.9 946.8,295.3 950.5,295.3 950.5,288.5 954.2,288.5 954.2,291.4 958.0,291.4 958.0,294.0 961.8,294.0 961.8,280.8 965.5,280.8 965.5,284.2 969.2,284.2 969.2,289.3 973.0,289.3 973.0,284.7 976.8,284.7 976.8,289.7 980.5,289.7 980.5,284.0 984.2,284.0 984.2,293.5 988.0,293.5 988.0,294.0 991.8,294.0 991.8,308.6 995.5,308.6 995.5,294.7 999.2,294.7 999.2,286.7 1003.0,286.7 1003.0,345.5 1006.8,345.5 1006.8,291.0 1010.5,291.0 1010.5,283.2 1014.2,283.2 1014.2,279.9 1018.0,279.9 1018.0,291.0 1021.8,291.0 1021.8,292.2 1025.5,292.2 1025.5,292.2 1029.2,292.2 1029.2,281.8 1033.0,281.8 1033.0,286.1 1036.8,286.1 1036.8,292.1 1040.5,292.1 1040.5,285.3 1044.2,285.3 1044.2,267.6 1048.0,267.6 1048.0,287.0 1051.8,287.0 1051.8,296.6 1055.5,296.6 1055.5,283.9 1059.2,283.9 1059.2,295.4 1063.0,295.4 1063.0,291.8 1066.8,291.8 1066.8,286.6 1070.5,286.6 1070.5,317.4 1074.2,317.4 1074.2,287.6 1078.0,287.6 1078.0,292.2 1081.8,292.2 1081.8,287.1 1085.5,287.1 1085.5,318.9 1089.2,318.9 1089.2,294.4 1093.0,294.4 1093.0,289.5 1096.8,289.5 1096.8,281.3 1100.5,281.3 1100.5,256.4 1104.2,256.4 1104.2,265.0 1108.0,265.0 1108.0,288.1 1111.8,288.1 1111.8,285.4 1115.5,285.4 1115.5,297.1 1119.2,297.1 1119.2,286.8 1123.0,286.8 1123.0,292.3 1126.8,292.3 1126.8,288.0 1130.5,288.0 1130.5,283.6 1134.2,283.6 1134.2,286.3 1138.0,286.3 1138.0,293.0 1141.8,293.0 1141.8,291.3 1145.5,291.3 1145.5,284.2 1149.2,284.2 1149.2,267.6 1153.0,267.6 1153.0,280.0 1156.8,280.0 1156.8,323.1 1160.5,323.1 1160.5,289.3 1164.2,289.3 1164.2,285.1 1168.0,285.1 1168.0,289.9 1171.8,289.9 1171.8,288.9 1175.5,288.9 1175.5,284.1 1179.2,284.1 1179.2,283.6 1183.0,283.6 1183.0,287.9 1186.8,287.9 1186.8,295.0 1190.5,295.0 1190.5,289.1 1194.2,289.1 1194.2,295.2 1198.0,295.2 1198.0,279.9 1201.8,279.9 1201.8,292.9 1205.5,292.9 1205.5,308.1 1209.2,308.1 1209.2,263.1 1213.0,263.1 1213.0,280.5 1216.8,280.5 1216.8,345.8 1220.5,345.8 1220.5,285.6 1224.2,285.6 1224.2,295.6 1228.0,295.6 1228.0,288.7 1231.8,288.7 1231.8,285.1 1235.5,285.1 1235.5,435.1 1239.2,435.1 1239.2,286.1 1243.0,286.1 1243.0,280.6 1246.8,280.6 1246.8,289.2 1250.5,289.2 1250.5,283.7 1254.2,283.7 1254.2,285.3 1258.0,285.3 1258.0,268.0 1261.8,268.0 1261.8,332.8 1265.5,332.8 1265.5,286.2 1269.2,286.2 1269.2,285.1 1273.0,285.1 1273.0,285.3 1276.8,285.3 1276.8,305.5 1280.5,305.5 1280.5,284.5 1284.2,284.5 1284.2,295.1 1288.0,295.1 1288.0,291.9 1291.8,291.9 1291.8,294.6 1295.5,294.6 1295.5,294.4 1299.2,294.4 1299.2,250.1 1303.0,250.1 1303.0,289.6 1306.8,289.6 1306.8,280.1 1310.5,280.1 1310.5,330.9 1314.2,330.9 1314.2,291.9 1318.0,291.9 1318.0,281.0 1321.8,281.0 1321.8,293.2 1325.5,293.2 1325.5,287.5 1329.2,287.5 1329.2,311.9 1333.0,311.9 1333.0,291.7 1336.8,291.7 1336.8,363.6 1340.5,363.6 1340.5,289.8 1344.2,289.8 1344.2,287.1 1348.0,287.1 1348.0,281.9 1351.8,281.9 1351.8,280.2 1355.5,280.2 1355.5,291.8 1359.2,291.8 1359.2,292.1 1363.0,292.1 1363.0,323.4 1366.8,323.4 1366.8,290.2 1370.5,290.2 1370.5,282.6 1374.2,282.6 1374.2,289.0 1378.0,289.0 1378.0,294.8 1381.8,294.8 1381.8,288.3 1385.5,288.3 1385.5,444.1 1389.2,444.1 1389.2,292.8 1393.0,292.8 1393.0,280.8 1396.8,280.8 1396.8,292.6 1400.5,292.6 1400.5,289.7 1404.2,289.7 1404.2,287.9 1408.0,287.9 1408.0,293.2 1411.8,293.2 1411.8,334.4 1415.5,334.4 1415.5,289.6 1419.2,289.6 1419.2,296.8 1423.0,296.8 1423.0,281.4 1426.8,281.4 1426.8,283.3 1430.5,283.3 1430.5,314.5 1434.2,314.5 1434.2,295.9 1438.0,295.9 1438.0,286.2 1441.8,286.2 1441.8,284.9 1445.5,284.9 1445.5,256.0 1449.2,256.0 1449.2,284.2 1453.0,284.2 1453.0,282.0 1456.8,282.0 1456.8,284.8 1460.5,284.8 1460.5,295.4 1464.2,295.4 1464.2,295.1 1468.0,295.1 1468.0,292.9 1471.8,292.9 1471.8,296.2 1475.5,296.2 1475.5,280.6 1479.2,280.6 1479.2,293.8 1483.0,293.8 1483.0,286.3 1486.8,286.3 1486.8,288.8 1490.5,288.8 1490.5,283.8 1494.2,283.8 1494.2,296.6 1498.0,296.6 1498.0,295.9 1501.8,295.9 1501.8,281.8 1505.5,281.8 1505.5,333.7 1509.2,333.7 1509.2,280.2 1513.0,280.2 1513.0,327.9 1516.8,327.9 1516.8,322.5 1520.5,322.5 1520.5,289.1 1524.2,289.1 1524.2,283.2 1528.0,283.2 1528.0,320.5 1531.8,320.5 1531.8,297.2 1535.5,297.2 1535.5,285.1 1539.2,285.1 1539.2,296.6 1543.0,296.6 1543.0,296.3 1546.8,296.3 1546.8,280.0 1550.5,280.0 1550.5,292.0 1554.2,292.0 1554.2,296.5 1558.0,296.5 1558.0,315.8 1561.8,315.8 1561.8,313.0 1565.5,313.0 1565.5,292.1 1569.2,292.1 1569.2,276.6 1573.0,276.6 1573.0,294.0 1576.8,294.0 1576.8,287.0 1580.5,287.0 1580.5,279.9 1584.2,279.9 1584.2,290.2 1588.0,290.2 1588.0,368.1 1591.8,368.1 1591.8,295.5 1595.5,295.5 1595.5,284.2 1599.2,284.2 1599.2,285.7 1603.0,285.7 1603.0,278.7 1606.8,278.7 1606.8,295.5 1610.5,295.5 1610.5,285.1 1614.2,285.1 1614.2,291.8 1618.0,291.8 1618.0,281.1 1621.8,281.1 1621.8,283.6 1625.5,283.6 1625.5,286.3 1629.2,286.3 1629.2,297.5 1633.0,297.5 1633.0,293.9 1636.8,293.9 1636.8,323.4 1640.5,323.4 1640.5,290.3 1644.2,290.3 1644.2,265.3 1648.0,265.3 1648.0,280.8 1651.8,280.8 1651.8,283.4 1655.5,283.4 1655.5,296.4 1659.2,296.4 1659.2,282.2 1663.0,282.2 1663.0,283.1 1666.8,283.1 1666.8,295.6 1670.5,295.6 1670.5,287.8 1674.2,287.8 1674.2,284.6 1678.0,284.6 1678.0,260.3 1681.8,260.3 1681.8,283.0 1685.5,283.0 1685.5,289.4 1689.2,289.4 1689.2,289.1 1693.0,289.1 1693.0,343.5 1696.8,343.5 1696.8,296.3 1700.5,296.3 1700.5,285.6 1704.2,285.6 1704.2,293.9 1708.0,293.9 1708.0,290.5 1711.8,290.5 1711.8,283.1 1715.5,283.1 1715.5,280.1 1719.2,280.1 1719.2,280.6 1723.0,280.6 1723.0,272.4 1726.8,272.4 1726.8,294.1 1730.5,294.1 1730.5,265.4 1734.2,265.4 1734.2,323.4 1738.0,323.4 1738.0,286.3 1741.8,286.3 1741.8,285.4 1745.5,285.4 1745.5,290.1 1749.2,290.1 1749.2,288.0 1753.0,288.0 1753.0,283.9 1756.8,283.9 1756.8,295.5 1760.5,295.5 1760.5,297.4 1764.2,297.4 1764.2,292.7 1768.0,292.7 1768.0,282.5 1771.8,282.5 1771.8,281.4 1775.5,281.4 1775.5,289.7 1779.2,289.7 1779.2,261.5 1783.0,261.5 1783.0,284.5 1786.8,284.5 1786.8,288.0 1790.5,288.0 1790.5,288.3 1794.2,288.3 1794.2,284.7 1798.0,284.7 1798.0,294.1 1801.8,294.1 1801.8,294.0 1805.5,294.0 1805.5,288.7 1809.2,288.7 1809.2,296.7 1813.0,296.7 1813.0,284.9 1816.8,284.9 1816.8,285.8 1820.5,285.8 1820.5,294.7 1824.2,294.7 1824.2,296.2 1828.0,296.2 1828.0,292.5 1831.8,292.5 1831.8,282.8 1835.5,282.8 1835.5,256.3 1839.2,256.3 1839.2,356.9 1843.0,356.9 1843.0,296.1 1846.8,296.1 1846.8,280.8 1850.5,280.8 1850.5,297.3 1854.2,297.3 1854.2,283.0 1858.0,283.0 1858.0,297.4 1861.8,297.4 1861.8,338.1 1865.5,338.1 1865.5,293.8 1869.2,293.8 1869.2,296.6 1873.0,296.6 1873.0,267.6 1876.8,267.6 1876.8,294.0 1880.5,294.0 1880.5,293.6 1884.2,293.6 1884.2,285.4 1888.0,285.4 1888.0,291.3 1891.8,291.3 1891.8,372.6 1895.5,372.6 1895.5,284.9 1899.2,284.9 1899.2,297.0 1903.0,297.0 1903.0,284.7 1906.8,284.7 1906.8,280.3 1910.5,280.3 1910.5,288.2 1914.2,288.2 1914.2,283.3 1918.0,283.3 1918.0,302.4 1921.8,302.4 1921.8,289.2 1925.5,289.2 1925.5,287.1 1929.2,287.1 1929.2,288.2 1933.0,288.2 1933.0,287.5 1936.8,287.5 1936.8,267.6 1940.5,267.6 1940.5,295.9 1944.2,295.9 1944.2,297.6 1948.0,297.6 1948.0,313.7 1951.8,313.7 1951.8,284.6 1955.5,284.6 1955.5,285.4 1959.2,285.4 1959.2,292.4 1963.0,292.4 1963.0,281.6 1966.8,281.6 1966.8,313.1 1970.5,313.1 1970.5,292.2 1974.2,292.2 1974.2,287.3 1978.0,287.3 1978.0,286.9 1981.8,286.9 1981.8,354.7 1985.5,354.7 1985.5,263.8 1989.2,263.8 1989.2,286.7 1993.0,286.7 1993.0,296.8 1996.8,296.8 1996.8,290.2 2000.5,290.2 2000.5,281.8 2004.2,281.8 2004.2,295.2 2008.0,295.2 2008.0,286.8 2011.8,286.8 2011.8,293.9 2015.5,293.9 2015.5,286.3 2019.2,286.3 2019.2,285.3 2023.0,285.3 2023.0,285.1 2026.8,285.1 2026.8,288.2 2030.5,288.2 2030.5,286.4 2034.2,286.4 2034.2,293.8 2038.0,293.8 2038.0,293.0 2041.8,293.0 2041.8,296.8 2045.5,296.8 2045.5,336.8 2049.2,336.8 2049.2,293.5 2053.0,293.5 2053.0,260.4 2056.8,260.4 2056.8,293.5 2060.5,293.5 2060.5,283.6 2064.2,283.6 2064.2,283.2 2068.0,283.2 2068.0,290.2 2071.8,290.2 2071.8,286.7 2075.5,286.7 2075.5,293.4 2079.2,293.4 2079.2,284.2 2083.0,284.2 2083.0,289.5 2086.8,289.5 2086.8,293.7 2090.5,293.7 2090.5,296.8 2094.2,296.8 2094.2,289.2 2098.0,289.2 2098.0,290.9 2101.8,290.9 2101.8,284.9 2105.5,284.9 2105.5,282.3 2109.2,282.3 2109.2,289.2 2113.0,289.2 2113.0,296.8 2116.8,296.8 2116.8,281.0 2120.5,281.0 2120.5,292.1 2124.2,292.1 2124.2,284.6 2128.0,284.6 2128.0,280.1 2131.8,280.1 2131.8,282.3 2135.5,282.3 2135.5,296.5 2139.2,296.5 2139.2,281.8 2143.0,281.8 2143.0,293.0 2146.8,293.0 2146.8,335.8 2150.5,335.8 2150.5,283.5 2154.2,283.5 2154.2,350.2 2158.0,350.2 2158.0,288.2 2161.8,288.2 2161.8,294.3 2165.5,294.3 2165.5,297.4 2169.2,297.4 2169.2,290.8 2173.0,290.8 2173.0,285.8 2176.8,285.8 2176.8,294.6 2180.5,294.6 2180.5,282.8 2184.2,282.8 2184.2,283.6 2188.0,283.6 2188.0,283.7 2191.8,283.7 2191.8,332.0 2195.5,332.0 2195.5,294.8 2199.2,294.8 2199.2,308.7 2203.0,308.7 2203.0,290.5 2206.8,290.5 2206.8,320.9 2210.5,320.9 2210.5,284.6 2214.2,284.6 2214.2,318.9 2218.0,318.9 2218.0,289.8 2221.8,289.8 2221.8,284.1 2225.5,284.1 2225.5,280.0 2229.2,280.0 2229.2,284.5 2233.0,284.5 2233.0,288.1 2236.8,288.1 2236.8,295.6 2240.5,295.6 2240.5,291.5 2244.2,291.5 2244.2,287.1 2248.0,287.1 2248.0,368.1 2251.8,368.1 2251.8,293.9 2255.5,293.9 2255.5,245.2 2259.2,245.2 2259.2,290.8 2263.0,290.8 2263.0,295.3 2266.8,295.3 2266.8,292.1 2270.5,292.1 2270.5,286.8 2274.2,286.8 2274.2,297.5 2278.0,297.5 2278.0,281.0 2281.8,281.0 2281.8,289.5 2285.5,289.5 2285.5,269.8 2289.2,269.8 2289.2,262.3 2293.0,262.3 2293.0,363.6 2296.8,363.6 2296.8,289.8 2300.5,289.8 2300.5,293.4 2304.2,293.4 2304.2,282.8 2308.0,282.8 2308.0,291.8 2311.8,291.8 2311.8,289.5 2315.5,289.5 2315.5,354.7 2319.2,354.7 2319.2,325.2 2323.0,325.2 2323.0,296.9 2326.8,296.9 2326.8,291.1 2330.5,291.1 2330.5,292.7 2334.2,292.7 2334.2,280.3 2338.0,280.3 2338.0,249.7 2341.8,249.7 2341.8,377.0 2345.5,377.0 2345.5,294.6 2349.2,294.6 2349.2,261.7 2353.0,261.7 2353.0,286.6 2356.8,286.6 2356.8,292.5 2360.5,292.5 2360.5,297.1 2364.2,297.1 2364.2,296.2 2368.0,296.2 2368.0,283.0 2371.8,283.0 2371.8,294.9 2375.5,294.9 2375.5,291.7 2379.2,291.7 2379.2,292.6 2383.0,292.6 2383.0,288.5 2386.8,288.5 2386.8,332.4 2390.5,332.4 2390.5,285.6 2394.2,285.6 2394.2,296.1 2398.0,296.1 2398.0,288.7 2401.8,288.7 2401.8,284.0 2405.5,284.0 2405.5,261.3 2409.2,261.3 2409.2,288.1 2413.0,288.1 2413.0,293.1 2416.8,293.1 2416.8,280.6 2420.5,280.6 2420.5,298.6 2424.2,298.6 2424.2,250.4 2428.0,250.4 2428.0,272.7 2431.8,272.7 2431.8,284.8 2435.5,284.8 2435.5,327.9 2439.2,327.9 2439.2,282.7 2443.0,282.7 2443.0,354.7 2446.8,354.7 2446.8,256.3 2450.5,256.3 2450.5,246.0 2454.2,246.0 2454.2,290.2 2458.0,290.2 2458.0,296.6 2461.8,296.6 2461.8,292.4 2465.5,292.4 2465.5,321.0 2469.2,321.0 2469.2,293.2 2473.0,293.2 2473.0,296.3 2476.8,296.3 2476.8,295.0 2480.5,295.0 2480.5,297.3 2484.2,297.3 2484.2,286.2 2488.0,286.2 2488.0,295.8 2491.8,295.8 2491.8,336.8 2495.5,336.8 2495.5,297.0 2499.2,297.0 2499.2,289.8 2503.0,289.8 2503.0,280.8 2506.8,280.8 2506.8,285.5 2510.5,285.5 2510.5,287.7 2514.2,287.7 2514.2,284.4 2518.0,284.4 2518.0,283.1 2521.8,283.1 2521.8,274.7 2525.5,274.7 2525.5,279.7 2529.2,279.7 2529.2,297.5 2533.0,297.5 2533.0,269.8 2536.8,269.8 2536.8,292.7 2540.5,292.7 2540.5,287.2 2544.2,287.2 2544.2,285.3 2548.0,285.3 2548.0,292.0 2551.8,292.0 2551.8,297.1 2555.5,297.1 2555.5,312.1 2559.2,312.1 2559.2,292.8 2563.0,292.8 2563.0,289.0 2566.8,289.0 2566.8,294.5 2570.5,294.5 2570.5,295.1 2574.2,295.1 2574.2,295.2 2578.0,295.2 2578.0,280.8 2581.8,280.8 2581.8,290.5 2585.5,290.5 2585.5,281.8 2589.2,281.8 2589.2,295.6 2593.0,295.6 2593.0,435.1 2596.8,435.1 2596.8,284.8 2600.5,284.8 2600.5,263.1 2604.2,263.1 2604.2,290.5 2608.0,290.5 2608.0,280.7 2611.8,280.7 2611.8,291.9 2615.5,291.9 2615.5,284.9 2619.2,284.9 2619.2,294.1 2623.0,294.1 2623.0,288.4 2626.8,288.4 2626.8,261.1 2630.5,261.1 2630.5,281.1 2634.2,281.1 2634.2,310.0 2638.0,310.0 2638.0,293.4 2641.8,293.4 2641.8,286.3 2645.5,286.3 2645.5,279.9 2649.2,279.9 2649.2,282.0 2653.0,282.0 2653.0,331.8 2656.8,331.8 2656.8,287.7 2660.5,287.7 2660.5,296.5 2664.2,296.5 2664.2,262.4 2668.0,262.4 2668.0,288.1 2671.8,288.1 2671.8,319.5 2675.5,319.5 2675.5,285.1 2679.2,285.1 2679.2,238.5 2683.0,238.5 2683.0,290.8 2686.8,290.8 2686.8,268.3 2690.5,268.3 2690.5,282.2 2694.2,282.2 2694.2,368.1 2698.0,368.1 2698.0,285.4 2701.8,285.4 2701.8,293.3 2705.5,293.3 2705.5,292.2 2709.2,292.2 2709.2,281.8 2713.0,281.8 2713.0,294.5 2716.8,294.5 2716.8,286.2 2720.5,286.2 2720.5,297.2 2724.2,297.2 2724.2,292.3 2728.0,292.3 2728.0,293.5 2731.8,293.5 2731.8,297.1 2735.5,297.1 2735.5,286.4 2739.2,286.4 2739.2,291.3 2743.0,291.3 2743.0,294.9 2746.8,294.9 2746.8,368.1 2750.5,368.1 2750.5,284.2 2754.2,284.2 2754.2,294.0 2758.0,294.0 2758.0,286.5 2761.8,286.5 2761.8,291.2 2765.5,291.2 2765.5,284.3 2769.2,284.3 2769.2,295.5 2773.0,295.5 2773.0,283.3 2776.8,283.3 2776.8,253.7 2780.5,253.7 2780.5,294.1 2784.2,294.1 2784.2,324.6 2788.0,324.6 2788.0,279.9 2791.8,279.9 2791.8,315.2 2795.5,315.2 2795.5,327.9 2799.2,327.9 2799.2,295.3 2803.0,295.3 2803.0,294.2 2806.8,294.2 2806.8,281.4 2810.5,281.4 2810.5,282.5 2814.2,282.5 2814.2,403.8 2818.0,403.8 2818.0,291.3 2821.8,291.3 2821.8,291.7 2825.5,291.7 2825.5,287.1 2829.2,287.1 2829.2,292.1 2833.0,292.1 2833.0,294.5 2836.8,294.5 2836.8,280.5 2840.5,280.5 2840.5,285.2 2844.2,285.2 2844.2,289.8 2848.0,289.8 2848.0,285.6 2851.8,285.6 2851.8,327.9 2855.5,327.9 2855.5,319.9 2859.2,319.9 2859.2,290.3 2863.0,290.3 2863.0,289.0 2866.8,289.0 2866.8,284.3 2870.5,284.3 2870.5,282.1 2874.2,282.1 2874.2,339.7 2878.0,339.7 2878.0,286.5 2881.8,286.5 2881.8,297.3 2885.5,297.3 2885.5,294.4 2889.2,294.4 2889.2,281.8 2893.0,281.8 2893.0,295.9 2896.8,295.9 2896.8,282.0 2900.5,282.0 2900.5,291.3 2904.2,291.3 2904.2,287.5 2908.0,287.5 2908.0,286.3 2911.8,286.3 2911.8,292.5 2915.5,292.5 2915.5,310.8 2919.2,310.8 2919.2,310.2 2923.0,310.2 2923.0,320.8 2926.8,320.8 2926.8,285.3 2930.5,285.3 2930.5,294.8 2934.2,294.8 2934.2,323.3 2938.0,323.3 2938.0,292.7 2941.8,292.7 2941.8,283.1 2945.5,283.1 2945.5,292.9 2949.2,292.9 2949.2,286.1 2952.0,286.1 2952.0,569.0 2949.2,569.0 2949.2,569.2 2945.5,569.2 2945.5,557.1 2941.8,557.1 2941.8,547.9 2938.0,547.9 2938.0,546.8 2934.2,546.8 2934.2,564.3 2930.5,564.3 2930.5,563.9 2926.8,563.9 2926.8,587.0 2923.0,587.0 2923.0,580.7 2919.2,580.7 2919.2,576.3 2915.5,576.3 2915.5,539.4 2911.8,539.4 2911.8,573.2 2908.0,573.2 2908.0,564.7 2904.2,564.7 2904.2,560.8 2900.5,560.8 2900.5,541.8 2896.8,541.8 2896.8,542.5 2893.0,542.5 2893.0,533.4 2889.2,533.4 2889.2,556.1 2885.5,556.1 2885.5,588.5 2881.8,588.5 2881.8,596.0 2878.0,596.0 2878.0,600.1 2874.2,600.1 2874.2,617.0 2870.5,617.0 2870.5,613.9 2866.8,613.9 2866.8,615.7 2863.0,615.7 2863.0,616.5 2859.2,616.5 2859.2,613.9 2855.5,613.9 2855.5,600.2 2851.8,600.2 2851.8,576.6 2848.0,576.6 2848.0,548.8 2844.2,548.8 2844.2,537.9 2840.5,537.9 2840.5,554.8 2836.8,554.8 2836.8,581.2 2833.0,581.2 2833.0,613.9 2829.2,613.9 2829.2,571.6 2825.5,571.6 2825.5,605.8 2821.8,605.8 2821.8,595.0 2818.0,595.0 2818.0,586.2 2814.2,586.2 2814.2,569.2 2810.5,569.2 2810.5,586.6 2806.8,586.6 2806.8,607.9 2803.0,607.9 2803.0,636.2 2799.2,636.2 2799.2,550.6 2795.5,550.6 2795.5,581.3 2791.8,581.3 2791.8,551.3 2788.0,551.3 2788.0,563.5 2784.2,563.5 2784.2,576.2 2780.5,576.2 2780.5,592.8 2776.8,592.8 2776.8,609.4 2773.0,609.4 2773.0,615.0 2769.2,615.0 2769.2,612.0 2765.5,612.0 2765.5,604.9 2761.8,604.9 2761.8,614.4 2758.0,614.4 2758.0,614.8 2754.2,614.8 2754.2,623.0 2750.5,623.0 2750.5,622.8 2746.8,622.8 2746.8,623.6 2743.0,623.6 2743.0,606.8 2739.2,606.8 2739.2,604.9 2735.5,604.9 2735.5,604.7 2731.8,604.7 2731.8,597.4 2728.0,597.4 2728.0,588.6 2724.2,588.6 2724.2,587.0 2720.5,587.0 2720.5,597.7 2716.8,597.7 2716.8,601.2 2713.0,601.2 2713.0,601.5 2709.2,601.5 2709.2,542.7 2705.5,542.7 2705.5,613.9 2701.8,613.9 2701.8,614.1 2698.0,614.1 2698.0,607.0 2694.2,607.0 2694.2,614.2 2690.5,614.2 2690.5,609.6 2686.8,609.6 2686.8,604.9 2683.0,604.9 2683.0,578.9 2679.2,578.9 2679.2,564.7 2675.5,564.7 2675.5,577.6 2671.8,577.6 2671.8,579.7 2668.0,579.7 2668.0,602.7 2664.2,602.7 2664.2,594.1 2660.5,594.1 2660.5,590.8 2656.8,590.8 2656.8,588.5 2653.0,588.5 2653.0,582.6 2649.2,582.6 2649.2,567.9 2645.5,567.9 2645.5,560.5 2641.8,560.5 2641.8,562.1 2638.0,562.1 2638.0,551.3 2634.2,551.3 2634.2,574.9 2630.5,574.9 2630.5,573.1 2626.8,573.1 2626.8,524.7 2623.0,524.7 2623.0,609.4 2619.2,609.4 2619.2,603.7 2615.5,603.7 2615.5,567.8 2611.8,567.8 2611.8,550.7 2608.0,550.7 2608.0,529.0 2604.2,529.0 2604.2,566.8 2600.5,566.8 2600.5,636.2 2596.8,636.2 2596.8,629.4 2593.0,629.4 2593.0,616.5 2589.2,616.5 2589.2,609.4 2585.5,609.4 2585.5,585.3 2581.8,585.3 2581.8,569.2 2578.0,569.2 2578.0,574.8 2574.2,574.8 2574.2,590.7 2570.5,590.7 2570.5,595.6 2566.8,595.6 2566.8,596.0 2563.0,596.0 2563.0,606.1 2559.2,606.1 2559.2,605.6 2555.5,605.6 2555.5,608.4 2551.8,608.4 2551.8,618.3 2548.0,618.3 2548.0,611.0 2544.2,611.0 2544.2,576.1 2540.5,576.1 2540.5,552.5 2536.8,552.5 2536.8,526.7 2533.0,526.7 2533.0,559.6 2529.2,559.6 2529.2,588.5 2525.5,588.5 2525.5,627.3 2521.8,627.3 2521.8,619.4 2518.0,619.4 2518.0,625.1 2514.2,625.1 2514.2,622.8 2510.5,622.8 2510.5,617.2 2506.8,617.2 2506.8,610.6 2503.0,610.6 2503.0,593.4 2499.2,593.4 2499.2,587.0 2495.5,587.0 2495.5,559.0 2491.8,559.0 2491.8,542.4 2488.0,542.4 2488.0,564.1 2484.2,564.1 2484.2,582.4 2480.5,582.4 2480.5,603.5 2476.8,603.5 2476.8,613.9 2473.0,613.9 2473.0,596.0 2469.2,596.0 2469.2,595.8 2465.5,595.8 2465.5,587.0 2461.8,587.0 2461.8,593.3 2458.0,593.3 2458.0,585.8 2454.2,585.8 2454.2,596.1 2450.5,596.1 2450.5,593.7 2446.8,593.7 2446.8,574.7 2443.0,574.7 2443.0,509.1 2439.2,509.1 2439.2,540.1 2435.5,540.1 2435.5,533.4 2431.8,533.4 2431.8,603.6 2428.0,603.6 2428.0,631.7 2424.2,631.7 2424.2,597.9 2420.5,597.9 2420.5,581.7 2416.8,581.7 2416.8,562.5 2413.0,562.5 2413.0,576.2 2409.2,576.2 2409.2,593.0 2405.5,593.0 2405.5,607.1 2401.8,607.1 2401.8,607.2 2398.0,607.2 2398.0,587.2 2394.2,587.2 2394.2,575.9 2390.5,575.9 2390.5,577.8 2386.8,577.8 2386.8,564.7 2383.0,564.7 2383.0,576.5 2379.2,576.5 2379.2,583.7 2375.5,583.7 2375.5,589.2 2371.8,589.2 2371.8,600.4 2368.0,600.4 2368.0,595.5 2364.2,595.5 2364.2,582.0 2360.5,582.0 2360.5,532.1 2356.8,532.1 2356.8,564.7 2353.0,564.7 2353.0,570.9 2349.2,570.9 2349.2,580.3 2345.5,580.3 2345.5,568.1 2341.8,568.1 2341.8,555.8 2338.0,555.8 2338.0,565.0 2334.2,565.0 2334.2,556.9 2330.5,556.9 2330.5,567.5 2326.8,567.5 2326.8,571.5 2323.0,571.5 2323.0,578.1 2319.2,578.1 2319.2,586.9 2315.5,586.9 2315.5,594.0 2311.8,594.0 2311.8,592.9 2308.0,592.9 2308.0,596.0 2304.2,596.0 2304.2,582.8 2300.5,582.8 2300.5,575.9 2296.8,575.9 2296.8,563.8 2293.0,563.8 2293.0,564.7 2289.2,564.7 2289.2,593.7 2285.5,593.7 2285.5,572.5 2281.8,572.5 2281.8,564.7 2278.0,564.7 2278.0,582.7 2274.2,582.7 2274.2,590.0 2270.5,590.0 2270.5,600.4 2266.8,600.4 2266.8,584.0 2263.0,584.0 2263.0,560.2 2259.2,560.2 2259.2,586.4 2255.5,586.4 2255.5,615.7 2251.8,615.7 2251.8,658.5 2248.0,658.5 2248.0,633.9 2244.2,633.9 2244.2,609.8 2240.5,609.8 2240.5,550.0 2236.8,550.0 2236.8,494.5 2233.0,494.5 2233.0,522.3 2229.2,522.3 2229.2,548.2 2225.5,548.2 2225.5,574.0 2221.8,574.0 2221.8,604.9 2218.0,604.9 2218.0,600.6 2214.2,600.6 2214.2,591.2 2210.5,591.2 2210.5,582.7 2206.8,582.7 2206.8,566.3 2203.0,566.3 2203.0,564.7 2199.2,564.7 2199.2,555.1 2195.5,555.1 2195.5,555.5 2191.8,555.5 2191.8,555.8 2188.0,555.8 2188.0,562.1 2184.2,562.1 2184.2,571.9 2180.5,571.9 2180.5,575.9 2176.8,575.9 2176.8,591.5 2173.0,591.5 2173.0,596.1 2169.2,596.1 2169.2,607.2 2165.5,607.2 2165.5,612.1 2161.8,612.1 2161.8,613.9 2158.0,613.9 2158.0,602.8 2154.2,602.8 2154.2,591.3 2150.5,591.3 2150.5,538.9 2146.8,538.9 2146.8,565.7 2143.0,565.7 2143.0,560.2 2139.2,560.2 2139.2,568.9 2135.5,568.9 2135.5,552.8 2131.8,552.8 2131.8,532.8 2128.0,532.8 2128.0,618.3 2124.2,618.3 2124.2,609.7 2120.5,609.7 2120.5,621.3 2116.8,621.3 2116.8,612.7 2113.0,612.7 2113.0,609.4 2109.2,609.4 2109.2,607.2 2105.5,607.2 2105.5,600.7 2101.8,600.7 2101.8,593.7 2098.0,593.7 2098.0,591.5 2094.2,591.5 2094.2,579.2 2090.5,579.2 2090.5,568.6 2086.8,568.6 2086.8,551.3 2083.0,551.3 2083.0,561.8 2079.2,561.8 2079.2,589.0 2075.5,589.0 2075.5,604.9 2071.8,604.9 2071.8,586.6 2068.0,586.6 2068.0,584.2 2064.2,584.2 2064.2,564.7 2060.5,564.7 2060.5,586.5 2056.8,586.5 2056.8,615.3 2053.0,615.3 2053.0,634.0 2049.2,634.0 2049.2,611.8 2045.5,611.8 2045.5,591.1 2041.8,591.1 2041.8,580.1 2038.0,580.1 2038.0,556.8 2034.2,556.8 2034.2,546.8 2030.5,546.8 2030.5,573.4 2026.8,573.4 2026.8,601.7 2023.0,601.7 2023.0,624.8 2019.2,624.8 2019.2,645.1 2015.5,645.1 2015.5,540.1 2011.8,540.1 2011.8,574.4 2008.0,574.4 2008.0,631.7 2004.2,631.7 2004.2,628.8 2000.5,628.8 2000.5,620.0 1996.8,620.0 1996.8,622.1 1993.0,622.1 1993.0,620.6 1989.2,620.6 1989.2,579.9 1985.5,579.9 1985.5,551.3 1981.8,551.3 1981.8,577.7 1978.0,577.7 1978.0,611.1 1974.2,611.1 1974.2,620.6 1970.5,620.6 1970.5,578.7 1966.8,578.7 1966.8,564.7 1963.0,564.7 1963.0,575.4 1959.2,575.4 1959.2,598.5 1955.5,598.5 1955.5,617.9 1951.8,617.9 1951.8,622.8 1948.0,622.8 1948.0,605.2 1944.2,605.2 1944.2,580.8 1940.5,580.8 1940.5,561.8 1936.8,561.8 1936.8,546.8 1933.0,546.8 1933.0,562.5 1929.2,562.5 1929.2,569.5 1925.5,569.5 1925.5,570.9 1921.8,570.9 1921.8,591.4 1918.0,591.4 1918.0,600.4 1914.2,600.4 1914.2,603.8 1910.5,603.8 1910.5,606.8 1906.8,606.8 1906.8,608.7 1903.0,608.7 1903.0,604.9 1899.2,604.9 1899.2,585.9 1895.5,585.9 1895.5,510.0 1891.8,510.0 1891.8,546.8 1888.0,546.8 1888.0,553.6 1884.2,553.6 1884.2,557.6 1880.5,557.6 1880.5,564.7 1876.8,564.7 1876.8,585.5 1873.0,585.5 1873.0,598.0 1869.2,598.0 1869.2,609.6 1865.5,609.6 1865.5,622.8 1861.8,622.8 1861.8,618.2 1858.0,618.2 1858.0,621.5 1854.2,621.5 1854.2,627.3 1850.5,627.3 1850.5,622.5 1846.8,622.5 1846.8,618.3 1843.0,618.3 1843.0,594.5 1839.2,594.5 1839.2,564.7 1835.5,564.7 1835.5,564.3 1831.8,564.3 1831.8,572.9 1828.0,572.9 1828.0,580.4 1824.2,580.4 1824.2,584.8 1820.5,584.8 1820.5,577.2 1816.8,577.2 1816.8,528.9 1813.0,528.9 1813.0,573.9 1809.2,573.9 1809.2,575.9 1805.5,575.9 1805.5,607.0 1801.8,607.0 1801.8,636.3 1798.0,636.3 1798.0,658.5 1794.2,658.5 1794.2,594.0 1790.5,594.0 1790.5,546.8 1786.8,546.8 1786.8,552.6 1783.0,552.6 1783.0,571.2 1779.2,571.2 1779.2,568.1 1775.5,568.1 1775.5,584.8 1771.8,584.8 1771.8,580.7 1768.0,580.7 1768.0,576.7 1764.2,576.7 1764.2,566.9 1760.5,566.9 1760.5,583.9 1756.8,583.9 1756.8,601.0 1753.0,601.0 1753.0,620.6 1749.2,620.6 1749.2,607.7 1745.5,607.7 1745.5,552.4 1741.8,552.4 1741.8,587.3 1738.0,587.3 1738.0,563.9 1734.2,563.9 1734.2,555.8 1730.5,555.8 1730.5,541.4 1726.8,541.4 1726.8,529.0 1723.0,529.0 1723.0,546.5 1719.2,546.5 1719.2,574.7 1715.5,574.7 1715.5,597.9 1711.8,597.9 1711.8,609.4 1708.0,609.4 1708.0,602.3 1704.2,602.3 1704.2,584.0 1700.5,584.0 1700.5,579.5 1696.8,579.5 1696.8,569.1 1693.0,569.1 1693.0,558.0 1689.2,558.0 1689.2,568.5 1685.5,568.5 1685.5,526.6 1681.8,526.6 1681.8,596.0 1678.0,596.0 1678.0,575.9 1674.2,575.9 1674.2,547.2 1670.5,547.2 1670.5,513.3 1666.8,513.3 1666.8,533.2 1663.0,533.2 1663.0,565.5 1659.2,565.5 1659.2,593.7 1655.5,593.7 1655.5,593.1 1651.8,593.1 1651.8,597.3 1648.0,597.3 1648.0,604.9 1644.2,604.9 1644.2,570.6 1640.5,570.6 1640.5,551.3 1636.8,551.3 1636.8,557.9 1633.0,557.9 1633.0,551.3 1629.2,551.3 1629.2,587.0 1625.5,587.0 1625.5,588.7 1621.8,588.7 1621.8,590.0 1618.0,590.0 1618.0,604.9 1614.2,604.9 1614.2,611.7 1610.5,611.7 1610.5,539.1 1606.8,539.1 1606.8,609.4 1603.0,609.4 1603.0,593.7 1599.2,593.7 1599.2,578.2 1595.5,578.2 1595.5,509.1 1591.8,509.1 1591.8,542.4 1588.0,542.4 1588.0,566.8 1584.2,566.8 1584.2,575.8 1580.5,575.8 1580.5,566.1 1576.8,566.1 1576.8,613.9 1573.0,613.9 1573.0,591.5 1569.2,591.5 1569.2,558.5 1565.5,558.5 1565.5,546.8 1561.8,546.8 1561.8,567.7 1558.0,567.7 1558.0,582.4 1554.2,582.4 1554.2,596.0 1550.5,596.0 1550.5,590.2 1546.8,590.2 1546.8,589.2 1543.0,589.2 1543.0,589.0 1539.2,589.0 1539.2,596.0 1535.5,596.0 1535.5,583.6 1531.8,583.6 1531.8,585.2 1528.0,585.2 1528.0,518.5 1524.2,518.5 1524.2,571.4 1520.5,571.4 1520.5,583.2 1516.8,583.2 1516.8,593.8 1513.0,593.8 1513.0,604.9 1509.2,604.9 1509.2,600.6 1505.5,600.6 1505.5,604.7 1501.8,604.7 1501.8,610.2 1498.0,610.2 1498.0,627.4 1494.2,627.4 1494.2,622.8 1490.5,622.8 1490.5,518.6 1486.8,518.6 1486.8,533.4 1483.0,533.4 1483.0,555.8 1479.2,555.8 1479.2,568.5 1475.5,568.5 1475.5,585.7 1471.8,585.7 1471.8,591.9 1468.0,591.9 1468.0,616.1 1464.2,616.1 1464.2,609.1 1460.5,609.1 1460.5,538.6 1456.8,538.6 1456.8,594.0 1453.0,594.0 1453.0,584.3 1449.2,584.3 1449.2,573.6 1445.5,573.6 1445.5,567.0 1441.8,567.0 1441.8,565.7 1438.0,565.7 1438.0,558.0 1434.2,558.0 1434.2,561.2 1430.5,561.2 1430.5,574.9 1426.8,574.9 1426.8,586.7 1423.0,586.7 1423.0,600.4 1419.2,600.4 1419.2,587.8 1415.5,587.8 1415.5,571.4 1411.8,571.4 1411.8,553.5 1408.0,553.5 1408.0,552.2 1404.2,552.2 1404.2,557.9 1400.5,557.9 1400.5,571.4 1396.8,571.4 1396.8,564.9 1393.0,564.9 1393.0,545.9 1389.2,545.9 1389.2,510.9 1385.5,510.9 1385.5,533.4 1381.8,533.4 1381.8,562.3 1378.0,562.3 1378.0,587.4 1374.2,587.4 1374.2,596.0 1370.5,596.0 1370.5,574.6 1366.8,574.6 1366.8,555.8 1363.0,555.8 1363.0,579.6 1359.2,579.6 1359.2,557.1 1355.5,557.1 1355.5,542.4 1351.8,542.4 1351.8,604.9 1348.0,604.9 1348.0,592.0 1344.2,592.0 1344.2,577.8 1340.5,577.8 1340.5,569.2 1336.8,569.2 1336.8,566.0 1333.0,566.0 1333.0,544.4 1329.2,544.4 1329.2,533.4 1325.5,533.4 1325.5,569.6 1321.8,569.6 1321.8,613.9 1318.0,613.9 1318.0,606.9 1314.2,606.9 1314.2,600.4 1310.5,600.4 1310.5,605.1 1306.8,605.1 1306.8,603.9 1303.0,603.9 1303.0,591.0 1299.2,591.0 1299.2,590.7 1295.5,590.7 1295.5,596.0 1291.8,596.0 1291.8,594.9 1288.0,594.9 1288.0,584.6 1284.2,584.6 1284.2,545.4 1280.5,545.4 1280.5,574.5 1276.8,574.5 1276.8,578.1 1273.0,578.1 1273.0,545.6 1269.2,545.6 1269.2,562.3 1265.5,562.3 1265.5,572.0 1261.8,572.0 1261.8,560.2 1258.0,560.2 1258.0,584.8 1254.2,584.8 1254.2,593.6 1250.5,593.6 1250.5,623.3 1246.8,623.3 1246.8,645.1 1243.0,645.1 1243.0,599.1 1239.2,599.1 1239.2,533.4 1235.5,533.4 1235.5,494.7 1231.8,494.7 1231.8,498.8 1228.0,498.8 1228.0,572.6 1224.2,572.6 1224.2,582.6 1220.5,582.6 1220.5,594.2 1216.8,594.2 1216.8,592.0 1213.0,592.0 1213.0,592.0 1209.2,592.0 1209.2,604.9 1205.5,604.9 1205.5,600.5 1201.8,600.5 1201.8,601.7 1198.0,601.7 1198.0,604.9 1194.2,604.9 1194.2,598.2 1190.5,598.2 1190.5,573.5 1186.8,573.5 1186.8,538.4 1183.0,538.4 1183.0,553.6 1179.2,553.6 1179.2,540.1 1175.5,540.1 1175.5,476.4 1171.8,476.4 1171.8,560.6 1168.0,560.6 1168.0,560.2 1164.2,560.2 1164.2,590.8 1160.5,590.8 1160.5,598.2 1156.8,598.2 1156.8,611.6 1153.0,611.6 1153.0,591.4 1149.2,591.4 1149.2,584.0 1145.5,584.0 1145.5,564.7 1141.8,564.7 1141.8,571.1 1138.0,571.1 1138.0,565.5 1134.2,565.5 1134.2,573.6 1130.5,573.6 1130.5,573.8 1126.8,573.8 1126.8,555.1 1123.0,555.1 1123.0,560.2 1119.2,560.2 1119.2,526.8 1115.5,526.8 1115.5,596.0 1111.8,596.0 1111.8,594.8 1108.0,594.8 1108.0,577.1 1104.2,577.1 1104.2,575.9 1100.5,575.9 1100.5,518.7 1096.8,518.7 1096.8,575.7 1093.0,575.7 1093.0,587.0 1089.2,587.0 1089.2,504.8 1085.5,504.8 1085.5,558.1 1081.8,558.1 1081.8,546.3 1078.0,546.3 1078.0,535.7 1074.2,535.7 1074.2,575.1 1070.5,575.1 1070.5,596.0 1066.8,596.0 1066.8,598.9 1063.0,598.9 1063.0,586.5 1059.2,586.5 1059.2,587.0 1055.5,587.0 1055.5,529.0 1051.8,529.0 1051.8,506.6 1048.0,506.6 1048.0,533.6 1044.2,533.6 1044.2,552.2 1040.5,552.2 1040.5,588.3 1036.8,588.3 1036.8,609.4 1033.0,609.4 1033.0,602.7 1029.2,602.7 1029.2,586.4 1025.5,586.4 1025.5,583.9 1021.8,583.9 1021.8,566.1 1018.0,566.1 1018.0,560.2 1014.2,560.2 1014.2,582.9 1010.5,582.9 1010.5,595.5 1006.8,595.5 1006.8,609.4 1003.0,609.4 1003.0,570.2 999.2,570.2 999.2,576.3 995.5,576.3 995.5,555.8 991.8,555.8 991.8,569.7 988.0,569.7 988.0,573.6 984.2,573.6 984.2,581.9 980.5,581.9 980.5,591.5 976.8,591.5 976.8,597.0 973.0,597.0 973.0,609.3 969.2,609.3 969.2,618.3 965.5,618.3 965.5,612.8 961.8,612.8 961.8,615.6 958.0,615.6 958.0,597.7 954.2,597.7 954.2,600.4 950.5,600.4 950.5,598.5 946.8,598.5 946.8,601.9 943.0,601.9 943.0,595.3 939.2,595.3 939.2,588.3 935.5,588.3 935.5,582.6 931.8,582.6 931.8,585.6 928.0,585.6 928.0,560.3 924.2,560.3 924.2,596.1 920.5,596.1 920.5,600.6 916.8,600.6 916.8,570.3 913.0,570.3 913.0,613.9 909.2,613.9 909.2,614.3 905.5,614.3 905.5,620.4 901.8,620.4 901.8,618.6 898.0,618.6 898.0,620.3 894.2,620.3 894.2,611.5 890.5,611.5 890.5,620.6 886.8,620.6 886.8,615.4 883.0,615.4 883.0,608.7 879.2,608.7 879.2,591.6 875.5,591.6 875.5,600.1 871.8,600.1 871.8,592.5 868.0,592.5 868.0,578.1 864.2,578.1 864.2,572.2 860.5,572.2 860.5,560.2 856.8,560.2 856.8,568.0 853.0,568.0 853.0,556.2 849.2,556.2 849.2,509.4 845.5,509.4 845.5,568.9 841.8,568.9 841.8,569.2 838.0,569.2 838.0,562.2 834.2,562.2 834.2,489.9 830.5,489.9 830.5,543.6 826.8,543.6 826.8,533.4 823.0,533.4 823.0,548.4 819.2,548.4 819.2,563.8 815.5,563.8 815.5,587.0 811.8,587.0 811.8,579.6 808.0,579.6 808.0,589.1 804.2,589.1 804.2,588.3 800.5,588.3 800.5,589.2 796.8,589.2 796.8,594.2 793.0,594.2 793.0,591.5 789.2,591.5 789.2,524.9 785.5,524.9 785.5,585.8 781.8,585.8 781.8,580.5 778.0,580.5 778.0,573.6 774.2,573.6 774.2,571.9 770.5,571.9 770.5,555.9 766.8,555.9 766.8,484.2 763.0,484.2 763.0,540.1 759.2,540.1 759.2,580.8 755.5,580.8 755.5,622.8 751.8,622.8 751.8,609.3 748.0,609.3 748.0,610.8 744.2,610.8 744.2,591.5 740.5,591.5 740.5,583.5 736.8,583.5 736.8,564.6 733.0,564.6 733.0,542.4 729.2,542.4 729.2,546.3 725.5,546.3 725.5,564.8 721.8,564.8 721.8,566.1 718.0,566.1 718.0,573.6 714.2,573.6 714.2,581.3 710.5,581.3 710.5,585.0 706.8,585.0 706.8,603.0 703.0,603.0 703.0,609.4 699.2,609.4 699.2,599.3 695.5,599.3 695.5,597.0 691.8,597.0 691.8,572.8 688.0,572.8 688.0,575.2 684.2,575.2 684.2,560.2 680.5,560.2 680.5,561.0 676.8,561.0 676.8,561.9 673.0,561.9 673.0,577.1 669.2,577.1 669.2,539.4 665.5,539.4 665.5,582.6 661.8,582.6 661.8,598.2 658.0,598.2 658.0,601.7 654.2,601.7 654.2,609.0 650.5,609.0 650.5,622.8 646.8,622.8 646.8,608.4 643.0,608.4 643.0,603.5 639.2,603.5 639.2,588.1 635.5,588.1 635.5,564.2 631.8,564.2 631.8,548.0 628.0,548.0 628.0,537.9 624.2,537.9 624.2,539.3 620.5,539.3 620.5,547.9 616.8,547.9 616.8,555.8 613.0,555.8 613.0,561.9 609.2,561.9 609.2,583.4 605.5,583.4 605.5,584.0 601.8,584.0 601.8,600.4 598.0,600.4 598.0,550.6 594.2,550.6 594.2,519.2 590.5,519.2 590.5,563.6 586.8,563.6 586.8,562.8 583.0,562.8 583.0,550.2 579.2,550.2 579.2,526.6 575.5,526.6 575.5,522.3 571.8,522.3 571.8,548.3 568.0,548.3 568.0,581.2 564.2,581.2 564.2,605.7 560.5,605.7 560.5,629.5 556.8,629.5 556.8,619.8 553.0,619.8 553.0,620.0 549.2,620.0 549.2,618.3 545.5,618.3 545.5,574.9 541.8,574.9 541.8,606.5 538.0,606.5 538.0,596.0 534.2,596.0 534.2,524.3 530.5,524.3 530.5,553.2 526.8,553.2 526.8,540.1 523.0,540.1 523.0,548.2 519.2,548.2 519.2,555.6 515.5,555.6 515.5,564.3 511.8,564.3 511.8,564.7 508.0,564.7 508.0,582.4 504.2,582.4 504.2,600.5 500.5,600.5 500.5,609.4 496.8,609.4 496.8,629.0 493.0,629.0 493.0,648.6 489.2,648.6 489.2,654.1 485.5,654.1 485.5,605.0 481.8,605.0 481.8,609.1 478.0,609.1 478.0,585.3 474.2,585.3 474.2,567.1 470.5,567.1 470.5,555.8 466.8,555.8 466.8,596.0 463.0,596.0 463.0,590.2 459.2,590.2 459.2,583.1 455.5,583.1 455.5,585.1 451.8,585.1 451.8,582.6 448.0,582.6 448.0,582.7 444.2,582.7 444.2,532.8 440.5,532.8 440.5,596.0 436.8,596.0 436.8,588.9 433.0,588.9 433.0,580.3 429.2,580.3 429.2,546.1 425.5,546.1 425.5,564.7 421.8,564.7 421.8,609.4 418.0,609.4 418.0,610.5 414.2,610.5 414.2,576.6 410.5,576.6 410.5,600.4 406.8,600.4 406.8,615.3 403.0,615.3 403.0,613.6 399.2,613.6 399.2,591.6 395.5,591.6 395.5,631.7 391.8,631.7 391.8,616.0 388.0,616.0 388.0,591.5 384.2,591.5 384.2,520.0 380.5,520.0 380.5,530.0 376.8,530.0 376.8,535.8 373.0,535.8 373.0,540.3 369.2,540.3 369.2,560.2 365.5,560.2 365.5,561.8 361.8,561.8 361.8,572.6 358.0,572.6 358.0,587.0 354.2,587.0 354.2,593.1 350.5,593.1 350.5,591.4 346.8,591.4 346.8,579.8 343.0,579.8 343.0,582.6 339.2,582.6 339.2,654.1 335.5,654.1" fill="#92d050"/>
<polygon points="336.0,1535.2 339.8,1535.2 339.8,1535.2 343.5,1535.2 343.5,1535.2 347.2,1535.2 347.2,1498.8 351.0,1498.8 351.0,1498.8 354.8,1498.8 354.8,1548.7 358.5,1548.7 358.5,1613.0 362.2,1613.0 362.2,1613.0 366.0,1613.0 366.0,1420.4 369.8,1420.4 369.8,1341.4 373.5,1341.4 373.5,1270.5 377.2,1270.5 377.2,1251.3 381.0,1251.3 381.0,1251.3 384.8,1251.3 384.8,1251.3 388.5,1251.3 388.5,1276.3 392.2,1276.3 392.2,1348.2 396.0,1348.2 396.0,1389.8 399.8,1389.8 399.8,1439.8 403.5,1439.8 403.5,1464.4 407.2,1464.4 407.2,1612.4 411.0,1612.4 411.0,1620.5 414.8,1620.5 414.8,1612.4 418.5,1612.4 418.5,1448.9 422.2,1448.9 422.2,1448.9 426.0,1448.9 426.0,1489.5 429.8,1489.5 429.8,1581.6 433.5,1581.6 433.5,1510.2 437.2,1510.2 437.2,1510.2 441.0,1510.2 441.0,1585.5 444.8,1585.5 444.8,1536.6 448.5,1536.6 448.5,1462.5 452.2,1462.5 452.2,1462.5 456.0,1462.5 456.0,1475.9 459.8,1475.9 459.8,1487.2 463.5,1487.2 463.5,1491.7 467.2,1491.7 467.2,1425.5 471.0,1425.5 471.0,1346.7 474.8,1346.7 474.8,1346.7 478.5,1346.7 478.5,1359.5 482.2,1359.5 482.2,1367.1 486.0,1367.1 486.0,1433.1 489.8,1433.1 489.8,1461.8 493.5,1461.8 493.5,1612.4 497.2,1612.4 497.2,1613.0 501.0,1613.0 501.0,1613.0 504.8,1613.0 504.8,1617.0 508.5,1617.0 508.5,1552.0 512.2,1552.0 512.2,1419.4 516.0,1419.4 516.0,1419.4 519.8,1419.4 519.8,1526.4 523.5,1526.4 523.5,1577.9 527.2,1577.9 527.2,1576.1 531.0,1576.1 531.0,1584.4 534.8,1584.4 534.8,1612.4 538.5,1612.4 538.5,1611.2 542.2,1611.2 542.2,1576.1 546.0,1576.1 546.0,1576.1 549.8,1576.1 549.8,1612.4 553.5,1612.4 553.5,1596.0 557.2,1596.0 557.2,1548.8 561.0,1548.8 561.0,1548.8 564.8,1548.8 564.8,1608.8 568.5,1608.8 568.5,1576.1 572.2,1576.1 572.2,1576.1 576.0,1576.1 576.0,1580.6 579.8,1580.6 579.8,1580.6 583.5,1580.6 583.5,1593.0 587.2,1593.0 587.2,1612.4 591.0,1612.4 591.0,1505.7 594.8,1505.7 594.8,1505.7 598.5,1505.7 598.5,1547.2 602.2,1547.2 602.2,1580.6 606.0,1580.6 606.0,1589.3 609.8,1589.3 609.8,1612.4 613.5,1612.4 613.5,1612.4 617.2,1612.4 617.2,1518.9 621.0,1518.9 621.0,1423.9 624.8,1423.9 624.8,1423.9 628.5,1423.9 628.5,1439.9 632.2,1439.9 632.2,1448.9 636.0,1448.9 636.0,1607.1 639.8,1607.1 639.8,1614.2 643.5,1614.2 643.5,1612.4 647.2,1612.4 647.2,1573.9 651.0,1573.9 651.0,1537.9 654.8,1537.9 654.8,1527.9 658.5,1527.9 658.5,1521.6 662.2,1521.6 662.2,1521.6 666.0,1521.6 666.0,1564.7 669.8,1564.7 669.8,1376.2 673.5,1376.2 673.5,1372.8 677.2,1372.8 677.2,1368.1 681.0,1368.1 681.0,1364.8 684.8,1364.8 684.8,1364.8 688.5,1364.8 688.5,1364.8 692.2,1364.8 692.2,1388.1 696.0,1388.1 696.0,1426.8 699.8,1426.8 699.8,1494.2 703.5,1494.2 703.5,1597.4 707.2,1597.4 707.2,1555.6 711.0,1555.6 711.0,1555.6 714.8,1555.6 714.8,1612.4 718.5,1612.4 718.5,1532.7 722.2,1532.7 722.2,1519.3 726.0,1519.3 726.0,1523.4 729.8,1523.4 729.8,1542.2 733.5,1542.2 733.5,1527.2 737.2,1527.2 737.2,1514.7 741.0,1514.7 741.0,1514.7 744.8,1514.7 744.8,1594.2 748.5,1594.2 748.5,1594.2 752.2,1594.2 752.2,1612.4 756.0,1612.4 756.0,1612.4 759.8,1612.4 759.8,1615.0 763.5,1615.0 763.5,1612.4 767.2,1612.4 767.2,1566.0 771.0,1566.0 771.0,1510.2 774.8,1510.2 774.8,1510.2 778.5,1510.2 778.5,1520.2 782.2,1520.2 782.2,1528.7 786.0,1528.7 786.0,1562.2 789.8,1562.2 789.8,1576.1 793.5,1576.1 793.5,1608.6 797.2,1608.6 797.2,1531.7 801.0,1531.7 801.0,1485.2 804.8,1485.2 804.8,1485.2 808.5,1485.2 808.5,1611.0 812.2,1611.0 812.2,1613.1 816.0,1613.1 816.0,1612.4 819.8,1612.4 819.8,1498.9 823.5,1498.9 823.5,1423.9 827.2,1423.9 827.2,1423.9 831.0,1423.9 831.0,1447.5 834.8,1447.5 834.8,1458.0 838.5,1458.0 838.5,1612.4 842.2,1612.4 842.2,1546.5 846.0,1546.5 846.0,1546.5 849.8,1546.5 849.8,1578.0 853.5,1578.0 853.5,1612.4 857.2,1612.4 857.2,1615.0 861.0,1615.0 861.0,1612.4 864.8,1612.4 864.8,1612.4 868.5,1612.4 868.5,1518.9 872.2,1518.9 872.2,1507.9 876.0,1507.9 876.0,1513.0 879.8,1513.0 879.8,1522.4 883.5,1522.4 883.5,1530.6 887.2,1530.6 887.2,1550.2 891.0,1550.2 891.0,1474.7 894.8,1474.7 894.8,1448.9 898.5,1448.9 898.5,1449.9 902.2,1449.9 902.2,1504.6 906.0,1504.6 906.0,1539.7 909.8,1539.7 909.8,1598.9 913.5,1598.9 913.5,1622.0 917.2,1622.0 917.2,1615.0 921.0,1615.0 921.0,1619.0 924.8,1619.0 924.8,1613.0 928.5,1613.0 928.5,1615.0 932.2,1615.0 932.2,1613.0 936.0,1613.0 936.0,1613.0 939.8,1613.0 939.8,1622.0 943.5,1622.0 943.5,1617.0 947.2,1617.0 947.2,1613.0 951.0,1613.0 951.0,1612.4 954.8,1612.4 954.8,1504.3 958.5,1504.3 958.5,1489.8 962.2,1489.8 962.2,1496.7 966.0,1496.7 966.0,1612.4 969.8,1612.4 969.8,1590.0 973.5,1590.0 973.5,1562.4 977.2,1562.4 977.2,1562.4 981.0,1562.4 981.0,1562.4 984.8,1562.4 984.8,1612.4 988.5,1612.4 988.5,1613.0 992.2,1613.0 992.2,1521.6 996.0,1521.6 996.0,1521.6 999.8,1521.6 999.8,1521.6 1003.5,1521.6 1003.5,1594.2 1007.2,1594.2 1007.2,1587.4 1011.0,1587.4 1011.0,1587.4 1014.8,1587.4 1014.8,1608.7 1018.5,1608.7 1018.5,1612.4 1022.2,1612.4 1022.2,1589.7 1026.0,1589.7 1026.0,1589.7 1029.8,1589.7 1029.8,1612.4 1033.5,1612.4 1033.5,1612.4 1037.2,1612.4 1037.2,1617.0 1041.0,1617.0 1041.0,1603.3 1044.8,1603.3 1044.8,1603.3 1048.5,1603.3 1048.5,1562.8 1052.2,1562.8 1052.2,1530.6 1056.0,1530.6 1056.0,1530.6 1059.8,1530.6 1059.8,1612.4 1063.5,1612.4 1063.5,1580.6 1067.2,1580.6 1067.2,1580.6 1071.0,1580.6 1071.0,1498.8 1074.8,1498.8 1074.8,1480.7 1078.5,1480.7 1078.5,1457.2 1082.2,1457.2 1082.2,1442.1 1086.0,1442.1 1086.0,1442.1 1089.8,1442.1 1089.8,1582.9 1093.5,1582.9 1093.5,1593.2 1097.2,1593.2 1097.2,1602.4 1101.0,1602.4 1101.0,1539.7 1104.8,1539.7 1104.8,1539.7 1108.5,1539.7 1108.5,1543.5 1112.2,1543.5 1112.2,1547.3 1116.0,1547.3 1116.0,1558.8 1119.8,1558.8 1119.8,1536.0 1123.5,1536.0 1123.5,1528.4 1127.2,1528.4 1127.2,1531.0 1131.0,1531.0 1131.0,1535.7 1134.8,1535.7 1134.8,1539.7 1138.5,1539.7 1138.5,1601.0 1142.2,1601.0 1142.2,1601.0 1146.0,1601.0 1146.0,1619.0 1149.8,1619.0 1149.8,1592.0 1153.5,1592.0 1153.5,1592.0 1157.2,1592.0 1157.2,1589.7 1161.0,1589.7 1161.0,1589.7 1164.8,1589.7 1164.8,1611.8 1168.5,1611.8 1168.5,1612.4 1172.2,1612.4 1172.2,1564.7 1176.0,1564.7 1176.0,1564.7 1179.8,1564.7 1179.8,1576.5 1183.5,1576.5 1183.5,1602.9 1187.2,1602.9 1187.2,1537.5 1191.0,1537.5 1191.0,1537.5 1194.8,1537.5 1194.8,1590.8 1198.5,1590.8 1198.5,1526.9 1202.2,1526.9 1202.2,1487.5 1206.0,1487.5 1206.0,1487.5 1209.8,1487.5 1209.8,1490.0 1213.5,1490.0 1213.5,1491.9 1217.2,1491.9 1217.2,1558.1 1221.0,1558.1 1221.0,1496.4 1224.8,1496.4 1224.8,1429.8 1228.5,1429.8 1228.5,1413.9 1232.2,1413.9 1232.2,1394.4 1236.0,1394.4 1236.0,1394.4 1239.8,1394.4 1239.8,1487.3 1243.5,1487.3 1243.5,1607.9 1247.2,1607.9 1247.2,1613.0 1251.0,1613.0 1251.0,1617.7 1254.8,1617.7 1254.8,1610.1 1258.5,1610.1 1258.5,1610.1 1262.2,1610.1 1262.2,1622.0 1266.0,1622.0 1266.0,1613.0 1269.8,1613.0 1269.8,1581.4 1273.5,1581.4 1273.5,1482.9 1277.2,1482.9 1277.2,1482.9 1281.0,1482.9 1281.0,1559.1 1284.8,1559.1 1284.8,1571.5 1288.5,1571.5 1288.5,1571.5 1292.2,1571.5 1292.2,1599.4 1296.0,1599.4 1296.0,1594.2 1299.8,1594.2 1299.8,1553.4 1303.5,1553.4 1303.5,1553.4 1307.2,1553.4 1307.2,1574.1 1311.0,1574.1 1311.0,1607.9 1314.8,1607.9 1314.8,1607.9 1318.5,1607.9 1318.5,1613.0 1322.2,1613.0 1322.2,1501.1 1326.0,1501.1 1326.0,1493.9 1329.8,1493.9 1329.8,1480.8 1333.5,1480.8 1333.5,1469.3 1337.2,1469.3 1337.2,1469.3 1341.0,1469.3 1341.0,1503.2 1344.8,1503.2 1344.8,1519.3 1348.5,1519.3 1348.5,1580.6 1352.2,1580.6 1352.2,1588.4 1356.0,1588.4 1356.0,1589.2 1359.8,1589.2 1359.8,1496.6 1363.5,1496.6 1363.5,1496.6 1367.2,1496.6 1367.2,1564.6 1371.0,1564.6 1371.0,1598.8 1374.8,1598.8 1374.8,1601.9 1378.5,1601.9 1378.5,1587.3 1382.2,1587.3 1382.2,1469.3 1386.0,1469.3 1386.0,1469.3 1389.8,1469.3 1389.8,1539.9 1393.5,1539.9 1393.5,1598.8 1397.2,1598.8 1397.2,1619.0 1401.0,1619.0 1401.0,1512.5 1404.8,1512.5 1404.8,1487.5 1408.5,1487.5 1408.5,1487.5 1412.2,1487.5 1412.2,1544.7 1416.0,1544.7 1416.0,1518.2 1419.8,1518.2 1419.8,1507.9 1423.5,1507.9 1423.5,1496.6 1427.2,1496.6 1427.2,1496.6 1431.0,1496.6 1431.0,1570.5 1434.8,1570.5 1434.8,1612.4 1438.5,1612.4 1438.5,1507.9 1442.2,1507.9 1442.2,1507.9 1446.0,1507.9 1446.0,1545.3 1449.8,1545.3 1449.8,1579.6 1453.5,1579.6 1453.5,1521.6 1457.2,1521.6 1457.2,1521.6 1461.0,1521.6 1461.0,1571.5 1464.8,1571.5 1464.8,1571.5 1468.5,1571.5 1468.5,1539.2 1472.2,1539.2 1472.2,1489.8 1476.0,1489.8 1476.0,1489.8 1479.8,1489.8 1479.8,1531.1 1483.5,1531.1 1483.5,1471.6 1487.2,1471.6 1487.2,1471.6 1491.0,1471.6 1491.0,1594.2 1494.8,1594.2 1494.8,1539.7 1498.5,1539.7 1498.5,1527.1 1502.2,1527.1 1502.2,1502.7 1506.0,1502.7 1506.0,1480.7 1509.8,1480.7 1509.8,1480.7 1513.5,1480.7 1513.5,1488.2 1517.2,1488.2 1517.2,1492.0 1521.0,1492.0 1521.0,1514.1 1524.8,1514.1 1524.8,1530.1 1528.5,1530.1 1528.5,1530.6 1532.2,1530.6 1532.2,1530.6 1536.0,1530.6 1536.0,1603.9 1539.8,1603.9 1539.8,1612.4 1543.5,1612.4 1543.5,1593.6 1547.2,1593.6 1547.2,1569.3 1551.0,1569.3 1551.0,1569.3 1554.8,1569.3 1554.8,1503.4 1558.5,1503.4 1558.5,1503.4 1562.2,1503.4 1562.2,1557.0 1566.0,1557.0 1566.0,1589.7 1569.8,1589.7 1569.8,1589.7 1573.5,1589.7 1573.5,1537.4 1577.2,1537.4 1577.2,1505.2 1581.0,1505.2 1581.0,1482.7 1584.8,1482.7 1584.8,1458.0 1588.5,1458.0 1588.5,1458.0 1592.2,1458.0 1592.2,1549.9 1596.0,1549.9 1596.0,1612.4 1599.8,1612.4 1599.8,1616.2 1603.5,1616.2 1603.5,1613.0 1607.2,1613.0 1607.2,1598.8 1611.0,1598.8 1611.0,1562.4 1614.8,1562.4 1614.8,1553.7 1618.5,1553.7 1618.5,1537.5 1622.2,1537.5 1622.2,1537.5 1626.0,1537.5 1626.0,1564.7 1629.8,1564.7 1629.8,1564.7 1633.5,1564.7 1633.5,1505.7 1637.2,1505.7 1637.2,1505.7 1641.0,1505.7 1641.0,1507.9 1644.8,1507.9 1644.8,1569.0 1648.5,1569.0 1648.5,1532.9 1652.2,1532.9 1652.2,1532.9 1656.0,1532.9 1656.0,1594.1 1659.8,1594.1 1659.8,1612.4 1663.5,1612.4 1663.5,1615.0 1667.2,1615.0 1667.2,1607.9 1671.0,1607.9 1671.0,1607.9 1674.8,1607.9 1674.8,1589.7 1678.5,1589.7 1678.5,1589.7 1682.2,1589.7 1682.2,1566.7 1686.0,1566.7 1686.0,1564.7 1689.8,1564.7 1689.8,1489.8 1693.5,1489.8 1693.5,1489.8 1697.2,1489.8 1697.2,1534.3 1701.0,1534.3 1701.0,1552.8 1704.8,1552.8 1704.8,1478.4 1708.5,1478.4 1708.5,1478.4 1712.2,1478.4 1712.2,1482.7 1716.0,1482.7 1716.0,1486.5 1719.8,1486.5 1719.8,1524.2 1723.5,1524.2 1723.5,1562.9 1727.2,1562.9 1727.2,1480.7 1731.0,1480.7 1731.0,1458.5 1734.8,1458.5 1734.8,1439.8 1738.5,1439.8 1738.5,1439.8 1742.2,1439.8 1742.2,1591.9 1746.0,1591.9 1746.0,1576.1 1749.8,1576.1 1749.8,1576.1 1753.5,1576.1 1753.5,1612.4 1757.2,1612.4 1757.2,1596.3 1761.0,1596.3 1761.0,1526.1 1764.8,1526.1 1764.8,1526.1 1768.5,1526.1 1768.5,1586.3 1772.2,1586.3 1772.2,1614.7 1776.0,1614.7 1776.0,1617.0 1779.8,1617.0 1779.8,1597.8 1783.5,1597.8 1783.5,1594.2 1787.2,1594.2 1787.2,1588.3 1791.0,1588.3 1791.0,1537.5 1794.8,1537.5 1794.8,1537.5 1798.5,1537.5 1798.5,1578.3 1802.2,1578.3 1802.2,1578.3 1806.0,1578.3 1806.0,1594.0 1809.8,1594.0 1809.8,1551.1 1813.5,1551.1 1813.5,1551.1 1817.2,1551.1 1817.2,1569.8 1821.0,1569.8 1821.0,1593.8 1824.8,1593.8 1824.8,1530.6 1828.5,1530.6 1828.5,1502.3 1832.2,1502.3 1832.2,1458.0 1836.0,1458.0 1836.0,1458.0 1839.8,1458.0 1839.8,1479.2 1843.5,1479.2 1843.5,1512.9 1847.2,1512.9 1847.2,1539.7 1851.0,1539.7 1851.0,1612.4 1854.8,1612.4 1854.8,1612.4 1858.5,1612.4 1858.5,1615.0 1862.2,1615.0 1862.2,1613.0 1866.0,1613.0 1866.0,1613.0 1869.8,1613.0 1869.8,1613.0 1873.5,1613.0 1873.5,1578.6 1877.2,1578.6 1877.2,1516.2 1881.0,1516.2 1881.0,1457.4 1884.8,1457.4 1884.8,1410.3 1888.5,1410.3 1888.5,1410.3 1892.2,1410.3 1892.2,1426.2 1896.0,1426.2 1896.0,1438.4 1899.8,1438.4 1899.8,1516.5 1903.5,1516.5 1903.5,1603.3 1907.2,1603.3 1907.2,1594.3 1911.0,1594.3 1911.0,1528.4 1914.8,1528.4 1914.8,1528.4 1918.5,1528.4 1918.5,1590.6 1922.2,1590.6 1922.2,1607.9 1926.0,1607.9 1926.0,1489.8 1929.8,1489.8 1929.8,1489.8 1933.5,1489.8 1933.5,1536.1 1937.2,1536.1 1937.2,1603.3 1941.0,1603.3 1941.0,1603.3 1944.8,1603.3 1944.8,1615.0 1948.5,1615.0 1948.5,1546.5 1952.2,1546.5 1952.2,1546.5 1956.0,1546.5 1956.0,1548.4 1959.8,1548.4 1959.8,1550.9 1963.5,1550.9 1963.5,1589.7 1967.2,1589.7 1967.2,1589.7 1971.0,1589.7 1971.0,1589.7 1974.8,1589.7 1974.8,1498.5 1978.5,1498.5 1978.5,1473.9 1982.2,1473.9 1982.2,1473.9 1986.0,1473.9 1986.0,1523.6 1989.8,1523.6 1989.8,1553.8 1993.5,1553.8 1993.5,1612.4 1997.2,1612.4 1997.2,1529.7 2001.0,1529.7 2001.0,1501.1 2004.8,1501.1 2004.8,1501.1 2008.5,1501.1 2008.5,1603.3 2012.2,1603.3 2012.2,1507.9 2016.0,1507.9 2016.0,1507.9 2019.8,1507.9 2019.8,1547.2 2023.5,1547.2 2023.5,1612.4 2027.2,1612.4 2027.2,1612.4 2031.0,1612.4 2031.0,1596.5 2034.8,1596.5 2034.8,1362.6 2038.5,1362.6 2038.5,1362.6 2042.2,1362.6 2042.2,1375.5 2046.0,1375.5 2046.0,1393.3 2049.8,1393.3 2049.8,1405.7 2053.5,1405.7 2053.5,1469.3 2057.2,1469.3 2057.2,1495.2 2061.0,1495.2 2061.0,1533.3 2064.8,1533.3 2064.8,1560.9 2068.5,1560.9 2068.5,1612.4 2072.2,1612.4 2072.2,1612.4 2076.0,1612.4 2076.0,1613.0 2079.8,1613.0 2079.8,1598.8 2083.5,1598.8 2083.5,1598.8 2087.2,1598.8 2087.2,1612.4 2091.0,1612.4 2091.0,1612.4 2094.8,1612.4 2094.8,1615.0 2098.5,1615.0 2098.5,1544.3 2102.2,1544.3 2102.2,1544.3 2106.0,1544.3 2106.0,1572.3 2109.8,1572.3 2109.8,1569.3 2113.5,1569.3 2113.5,1569.3 2117.2,1569.3 2117.2,1607.9 2121.0,1607.9 2121.0,1607.9 2124.8,1607.9 2124.8,1583.4 2128.5,1583.4 2128.5,1451.2 2132.2,1451.2 2132.2,1428.5 2136.0,1428.5 2136.0,1398.9 2139.8,1398.9 2139.8,1398.9 2143.5,1398.9 2143.5,1406.0 2147.2,1406.0 2147.2,1412.5 2151.0,1412.5 2151.0,1428.7 2154.8,1428.7 2154.8,1450.0 2158.5,1450.0 2158.5,1517.4 2162.2,1517.4 2162.2,1567.0 2166.0,1567.0 2166.0,1526.1 2169.8,1526.1 2169.8,1526.1 2173.5,1526.1 2173.5,1585.2 2177.2,1585.2 2177.2,1585.2 2181.0,1585.2 2181.0,1612.4 2184.8,1612.4 2184.8,1612.4 2188.5,1612.4 2188.5,1608.1 2192.2,1608.1 2192.2,1535.2 2196.0,1535.2 2196.0,1535.2 2199.8,1535.2 2199.8,1583.4 2203.5,1583.4 2203.5,1580.6 2207.2,1580.6 2207.2,1437.5 2211.0,1437.5 2211.0,1437.5 2214.8,1437.5 2214.8,1458.4 2218.5,1458.4 2218.5,1488.4 2222.2,1488.4 2222.2,1549.7 2226.0,1549.7 2226.0,1467.5 2229.8,1467.5 2229.8,1368.4 2233.5,1368.4 2233.5,1344.6 2237.2,1344.6 2237.2,1328.5 2241.0,1328.5 2241.0,1328.5 2244.8,1328.5 2244.8,1375.4 2248.5,1375.4 2248.5,1408.0 2252.2,1408.0 2252.2,1491.0 2256.0,1491.0 2256.0,1533.5 2259.8,1533.5 2259.8,1517.0 2263.5,1517.0 2263.5,1517.0 2267.2,1517.0 2267.2,1612.4 2271.0,1612.4 2271.0,1612.4 2274.8,1612.4 2274.8,1613.0 2278.5,1613.0 2278.5,1613.0 2282.2,1613.0 2282.2,1558.8 2286.0,1558.8 2286.0,1476.1 2289.8,1476.1 2289.8,1476.1 2293.5,1476.1 2293.5,1575.1 2297.2,1575.1 2297.2,1587.4 2301.0,1587.4 2301.0,1587.4 2304.8,1587.4 2304.8,1524.4 2308.5,1524.4 2308.5,1469.3 2312.2,1469.3 2312.2,1469.3 2316.0,1469.3 2316.0,1563.9 2319.8,1563.9 2319.8,1578.3 2323.5,1578.3 2323.5,1578.3 2327.2,1578.3 2327.2,1590.3 2331.0,1590.3 2331.0,1555.8 2334.8,1555.8 2334.8,1442.1 2338.5,1442.1 2338.5,1442.1 2342.2,1442.1 2342.2,1478.5 2346.0,1478.5 2346.0,1514.2 2349.8,1514.2 2349.8,1541.9 2353.5,1541.9 2353.5,1612.4 2357.2,1612.4 2357.2,1582.9 2361.0,1582.9 2361.0,1582.9 2364.8,1582.9 2364.8,1613.0 2368.5,1613.0 2368.5,1612.4 2372.2,1612.4 2372.2,1613.0 2376.0,1613.0 2376.0,1452.6 2379.8,1452.6 2379.8,1430.7 2383.5,1430.7 2383.5,1438.0 2387.2,1438.0 2387.2,1507.5 2391.0,1507.5 2391.0,1553.4 2394.8,1553.4 2394.8,1608.3 2398.5,1608.3 2398.5,1550.8 2402.2,1550.8 2402.2,1532.9 2406.0,1532.9 2406.0,1532.9 2409.8,1532.9 2409.8,1612.4 2413.5,1612.4 2413.5,1612.4 2417.2,1612.4 2417.2,1581.4 2421.0,1581.4 2421.0,1580.6 2424.8,1580.6 2424.8,1589.4 2428.5,1589.4 2428.5,1478.1 2432.2,1478.1 2432.2,1471.6 2436.0,1471.6 2436.0,1474.9 2439.8,1474.9 2439.8,1480.5 2443.5,1480.5 2443.5,1485.2 2447.2,1485.2 2447.2,1567.0 2451.0,1567.0 2451.0,1537.5 2454.8,1537.5 2454.8,1537.5 2458.5,1537.5 2458.5,1549.2 2462.2,1549.2 2462.2,1559.5 2466.0,1559.5 2466.0,1581.4 2469.8,1581.4 2469.8,1577.9 2473.5,1577.9 2473.5,1505.7 2477.2,1505.7 2477.2,1505.7 2481.0,1505.7 2481.0,1523.2 2484.8,1523.2 2484.8,1507.7 2488.5,1507.7 2488.5,1492.0 2492.2,1492.0 2492.2,1492.0 2496.0,1492.0 2496.0,1612.4 2499.8,1612.4 2499.8,1612.4 2503.5,1612.4 2503.5,1622.0 2507.2,1622.0 2507.2,1613.0 2511.0,1613.0 2511.0,1588.0 2514.8,1588.0 2514.8,1543.8 2518.5,1543.8 2518.5,1537.2 2522.2,1537.2 2522.2,1528.4 2526.0,1528.4 2526.0,1462.7 2529.8,1462.7 2529.8,1344.4 2533.5,1344.4 2533.5,1324.1 2537.2,1324.1 2537.2,1299.8 2541.0,1299.8 2541.0,1285.4 2544.8,1285.4 2544.8,1297.1 2548.5,1297.1 2548.5,1476.1 2552.2,1476.1 2552.2,1606.7 2556.0,1606.7 2556.0,1608.2 2559.8,1608.2 2559.8,1615.0 2563.5,1615.0 2563.5,1613.0 2567.2,1613.0 2567.2,1613.0 2571.0,1613.0 2571.0,1613.0 2574.8,1613.0 2574.8,1613.0 2578.5,1613.0 2578.5,1548.6 2582.2,1548.6 2582.2,1419.4 2586.0,1419.4 2586.0,1385.5 2589.8,1385.5 2589.8,1351.2 2593.5,1351.2 2593.5,1351.2 2597.2,1351.2 2597.2,1390.3 2601.0,1390.3 2601.0,1421.4 2604.8,1421.4 2604.8,1407.3 2608.5,1407.3 2608.5,1396.6 2612.2,1396.6 2612.2,1396.6 2616.0,1396.6 2616.0,1459.2 2619.8,1459.2 2619.8,1385.3 2623.5,1385.3 2623.5,1385.3 2627.2,1385.3 2627.2,1535.8 2631.0,1535.8 2631.0,1485.2 2634.8,1485.2 2634.8,1485.2 2638.5,1485.2 2638.5,1594.2 2642.2,1594.2 2642.2,1594.2 2646.0,1594.2 2646.0,1598.8 2649.8,1598.8 2649.8,1598.8 2653.5,1598.8 2653.5,1612.4 2657.2,1612.4 2657.2,1612.4 2661.0,1612.4 2661.0,1615.0 2664.8,1615.0 2664.8,1562.4 2668.5,1562.4 2668.5,1536.6 2672.2,1536.6 2672.2,1488.8 2676.0,1488.8 2676.0,1440.8 2679.8,1440.8 2679.8,1390.8 2683.5,1390.8 2683.5,1349.7 2687.2,1349.7 2687.2,1334.7 2691.0,1334.7 2691.0,1326.2 2694.8,1326.2 2694.8,1344.6 2698.5,1344.6 2698.5,1393.7 2702.2,1393.7 2702.2,1437.0 2706.0,1437.0 2706.0,1480.2 2709.8,1480.2 2709.8,1510.2 2713.5,1510.2 2713.5,1510.2 2717.2,1510.2 2717.2,1511.0 2721.0,1511.0 2721.0,1558.8 2724.8,1558.8 2724.8,1542.0 2728.5,1542.0 2728.5,1542.0 2732.2,1542.0 2732.2,1612.4 2736.0,1612.4 2736.0,1504.6 2739.8,1504.6 2739.8,1419.4 2743.5,1419.4 2743.5,1419.4 2747.2,1419.4 2747.2,1573.8 2751.0,1573.8 2751.0,1612.4 2754.8,1612.4 2754.8,1613.0 2758.5,1613.0 2758.5,1622.0 2762.2,1622.0 2762.2,1615.0 2766.0,1615.0 2766.0,1581.9 2769.8,1581.9 2769.8,1557.9 2773.5,1557.9 2773.5,1557.9 2777.2,1557.9 2777.2,1472.6 2781.0,1472.6 2781.0,1403.1 2784.8,1403.1 2784.8,1401.2 2788.5,1401.2 2788.5,1398.9 2792.2,1398.9 2792.2,1398.9 2796.0,1398.9 2796.0,1414.8 2799.8,1414.8 2799.8,1432.7 2803.5,1432.7 2803.5,1442.1 2807.2,1442.1 2807.2,1484.4 2811.0,1484.4 2811.0,1473.9 2814.8,1473.9 2814.8,1473.9 2818.5,1473.9 2818.5,1531.3 2822.2,1531.3 2822.2,1567.0 2826.0,1567.0 2826.0,1567.0 2829.8,1567.0 2829.8,1460.5 2833.5,1460.5 2833.5,1394.3 2837.2,1394.3 2837.2,1336.3 2841.0,1336.3 2841.0,1319.4 2844.8,1319.4 2844.8,1326.4 2848.5,1326.4 2848.5,1338.6 2852.2,1338.6 2852.2,1348.9 2856.0,1348.9 2856.0,1530.5 2859.8,1530.5 2859.8,1514.7 2863.5,1514.7 2863.5,1514.7 2867.2,1514.7 2867.2,1594.0 2871.0,1594.0 2871.0,1612.6 2874.8,1612.6 2874.8,1530.6 2878.5,1530.6 2878.5,1530.6 2882.2,1530.6 2882.2,1574.5 2886.0,1574.5 2886.0,1601.0 2889.8,1601.0 2889.8,1601.0 2893.5,1601.0 2893.5,1613.0 2897.2,1613.0 2897.2,1617.0 2901.0,1617.0 2901.0,1617.0 2904.8,1617.0 2904.8,1612.4 2908.5,1612.4 2908.5,1538.4 2912.2,1538.4 2912.2,1464.8 2916.0,1464.8 2916.0,1464.8 2919.8,1464.8 2919.8,1501.9 2923.5,1501.9 2923.5,1515.2 2927.2,1515.2 2927.2,1496.1 2931.0,1496.1 2931.0,1459.5 2934.8,1459.5 2934.8,1423.9 2938.5,1423.9 2938.5,1423.9 2942.2,1423.9 2942.2,1496.1 2946.0,1496.1 2946.0,1539.7 2949.8,1539.7 2949.8,1612.4 2952.0,1612.4 2952.0,1653.5 2949.8,1653.5 2949.8,1653.5 2946.0,1653.5 2946.0,1653.5 2942.2,1653.5 2942.2,1654.5 2938.5,1654.5 2938.5,1653.5 2934.8,1653.5 2934.8,1654.5 2931.0,1654.5 2931.0,1652.0 2927.2,1652.0 2927.2,1652.0 2923.5,1652.0 2923.5,1652.0 2919.8,1652.0 2919.8,1654.5 2916.0,1654.5 2916.0,1653.5 2912.2,1653.5 2912.2,1653.5 2908.5,1653.5 2908.5,1653.5 2904.8,1653.5 2904.8,1653.5 2901.0,1653.5 2901.0,1654.5 2897.2,1654.5 2897.2,1653.5 2893.5,1653.5 2893.5,1652.0 2889.8,1652.0 2889.8,1652.0 2886.0,1652.0 2886.0,1652.0 2882.2,1652.0 2882.2,1653.5 2878.5,1653.5 2878.5,1652.0 2874.8,1652.0 2874.8,1652.0 2871.0,1652.0 2871.0,1653.5 2867.2,1653.5 2867.2,1652.0 2863.5,1652.0 2863.5,1653.5 2859.8,1653.5 2859.8,1652.0 2856.0,1652.0 2856.0,1653.5 2852.2,1653.5 2852.2,1653.5 2848.5,1653.5 2848.5,1654.5 2844.8,1654.5 2844.8,1653.5 2841.0,1653.5 2841.0,1653.5 2837.2,1653.5 2837.2,1653.5 2833.5,1653.5 2833.5,1652.0 2829.8,1652.0 2829.8,1653.5 2826.0,1653.5 2826.0,1652.0 2822.2,1652.0 2822.2,1654.5 2818.5,1654.5 2818.5,1653.5 2814.8,1653.5 2814.8,1653.5 2811.0,1653.5 2811.0,1653.5 2807.2,1653.5 2807.2,1653.5 2803.5,1653.5 2803.5,1654.5 2799.8,1654.5 2799.8,1654.5 2796.0,1654.5 2796.0,1652.0 2792.2,1652.0 2792.2,1653.5 2788.5,1653.5 2788.5,1654.5 2784.8,1654.5 2784.8,1653.5 2781.0,1653.5 2781.0,1654.5 2777.2,1654.5 2777.2,1654.5 2773.5,1654.5 2773.5,1654.5 2769.8,1654.5 2769.8,1652.0 2766.0,1652.0 2766.0,1653.5 2762.2,1653.5 2762.2,1653.5 2758.5,1653.5 2758.5,1652.0 2754.8,1652.0 2754.8,1652.0 2751.0,1652.0 2751.0,1654.5 2747.2,1654.5 2747.2,1652.0 2743.5,1652.0 2743.5,1653.5 2739.8,1653.5 2739.8,1653.5 2736.0,1653.5 2736.0,1653.5 2732.2,1653.5 2732.2,1653.5 2728.5,1653.5 2728.5,1652.0 2724.8,1652.0 2724.8,1653.5 2721.0,1653.5 2721.0,1652.0 2717.2,1652.0 2717.2,1653.5 2713.5,1653.5 2713.5,1652.0 2709.8,1652.0 2709.8,1654.5 2706.0,1654.5 2706.0,1652.0 2702.2,1652.0 2702.2,1653.5 2698.5,1653.5 2698.5,1652.0 2694.8,1652.0 2694.8,1654.5 2691.0,1654.5 2691.0,1653.5 2687.2,1653.5 2687.2,1652.0 2683.5,1652.0 2683.5,1652.0 2679.8,1652.0 2679.8,1654.5 2676.0,1654.5 2676.0,1652.0 2672.2,1652.0 2672.2,1653.5 2668.5,1653.5 2668.5,1653.5 2664.8,1653.5 2664.8,1652.0 2661.0,1652.0 2661.0,1652.0 2657.2,1652.0 2657.2,1653.5 2653.5,1653.5 2653.5,1654.5 2649.8,1654.5 2649.8,1653.5 2646.0,1653.5 2646.0,1653.5 2642.2,1653.5 2642.2,1653.5 2638.5,1653.5 2638.5,1654.5 2634.8,1654.5 2634.8,1652.0 2631.0,1652.0 2631.0,1653.5 2627.2,1653.5 2627.2,1652.0 2623.5,1652.0 2623.5,1652.0 2619.8,1652.0 2619.8,1653.5 2616.0,1653.5 2616.0,1653.5 2612.2,1653.5 2612.2,1653.5 2608.5,1653.5 2608.5,1653.5 2604.8,1653.5 2604.8,1653.5 2601.0,1653.5 2601.0,1653.5 2597.2,1653.5 2597.2,1653.5 2593.5,1653.5 2593.5,1653.5 2589.8,1653.5 2589.8,1652.0 2586.0,1652.0 2586.0,1653.5 2582.2,1653.5 2582.2,1653.5 2578.5,1653.5 2578.5,1652.0 2574.8,1652.0 2574.8,1652.0 2571.0,1652.0 2571.0,1654.5 2567.2,1654.5 2567.2,1653.5 2563.5,1653.5 2563.5,1652.0 2559.8,1652.0 2559.8,1654.5 2556.0,1654.5 2556.0,1652.0 2552.2,1652.0 2552.2,1653.5 2548.5,1653.5 2548.5,1653.5 2544.8,1653.5 2544.8,1653.5 2541.0,1653.5 2541.0,1653.5 2537.2,1653.5 2537.2,1653.5 2533.5,1653.5 2533.5,1653.5 2529.8,1653.5 2529.8,1654.5 2526.0,1654.5 2526.0,1654.5 2522.2,1654.5 2522.2,1653.5 2518.5,1653.5 2518.5,1653.5 2514.8,1653.5 2514.8,1653.5 2511.0,1653.5 2511.0,1652.0 2507.2,1652.0 2507.2,1652.0 2503.5,1652.0 2503.5,1653.5 2499.8,1653.5 2499.8,1652.0 2496.0,1652.0 2496.0,1654.5 2492.2,1654.5 2492.2,1654.5 2488.5,1654.5 2488.5,1652.0 2484.8,1652.0 2484.8,1653.5 2481.0,1653.5 2481.0,1653.5 2477.2,1653.5 2477.2,1652.0 2473.5,1652.0 2473.5,1653.5 2469.8,1653.5 2469.8,1652.0 2466.0,1652.0 2466.0,1653.5 2462.2,1653.5 2462.2,1654.5 2458.5,1654.5 2458.5,1653.5 2454.8,1653.5 2454.8,1653.5 2451.0,1653.5 2451.0,1653.5 2447.2,1653.5 2447.2,1653.5 2443.5,1653.5 2443.5,1653.5 2439.8,1653.5 2439.8,1653.5 2436.0,1653.5 2436.0,1653.5 2432.2,1653.5 2432.2,1653.5 2428.5,1653.5 2428.5,1653.5 2424.8,1653.5 2424.8,1653.5 2421.0,1653.5 2421.0,1653.5 2417.2,1653.5 2417.2,1654.5 2413.5,1654.5 2413.5,1652.0 2409.8,1652.0 2409.8,1654.5 2406.0,1654.5 2406.0,1654.5 2402.2,1654.5 2402.2,1653.5 2398.5,1653.5 2398.5,1652.0 2394.8,1652.0 2394.8,1654.5 2391.0,1654.5 2391.0,1652.0 2387.2,1652.0 2387.2,1653.5 2383.5,1653.5 2383.5,1653.5 2379.8,1653.5 2379.8,1653.5 2376.0,1653.5 2376.0,1653.5 2372.2,1653.5 2372.2,1653.5 2368.5,1653.5 2368.5,1653.5 2364.8,1653.5 2364.8,1653.5 2361.0,1653.5 2361.0,1653.5 2357.2,1653.5 2357.2,1653.5 2353.5,1653.5 2353.5,1653.5 2349.8,1653.5 2349.8,1653.5 2346.0,1653.5 2346.0,1653.5 2342.2,1653.5 2342.2,1652.0 2338.5,1652.0 2338.5,1653.5 2334.8,1653.5 2334.8,1652.0 2331.0,1652.0 2331.0,1653.5 2327.2,1653.5 2327.2,1653.5 2323.5,1653.5 2323.5,1652.0 2319.8,1652.0 2319.8,1652.0 2316.0,1652.0 2316.0,1652.0 2312.2,1652.0 2312.2,1653.5 2308.5,1653.5 2308.5,1652.0 2304.8,1652.0 2304.8,1653.5 2301.0,1653.5 2301.0,1653.5 2297.2,1653.5 2297.2,1653.5 2293.5,1653.5 2293.5,1654.5 2289.8,1654.5 2289.8,1652.0 2286.0,1652.0 2286.0,1654.5 2282.2,1654.5 2282.2,1652.0 2278.5,1652.0 2278.5,1653.5 2274.8,1653.5 2274.8,1654.5 2271.0,1654.5 2271.0,1653.5 2267.2,1653.5 2267.2,1653.5 2263.5,1653.5 2263.5,1654.5 2259.8,1654.5 2259.8,1653.5 2256.0,1653.5 2256.0,1653.5 2252.2,1653.5 2252.2,1654.5 2248.5,1654.5 2248.5,1652.0 2244.8,1652.0 2244.8,1652.0 2241.0,1652.0 2241.0,1653.5 2237.2,1653.5 2237.2,1653.5 2233.5,1653.5 2233.5,1653.5 2229.8,1653.5 2229.8,1653.5 2226.0,1653.5 2226.0,1653.5 2222.2,1653.5 2222.2,1654.5 2218.5,1654.5 2218.5,1653.5 2214.8,1653.5 2214.8,1653.5 2211.0,1653.5 2211.0,1653.5 2207.2,1653.5 2207.2,1653.5 2203.5,1653.5 2203.5,1653.5 2199.8,1653.5 2199.8,1653.5 2196.0,1653.5 2196.0,1654.5 2192.2,1654.5 2192.2,1653.5 2188.5,1653.5 2188.5,1653.5 2184.8,1653.5 2184.8,1652.0 2181.0,1652.0 2181.0,1653.5 2177.2,1653.5 2177.2,1653.5 2173.5,1653.5 2173.5,1653.5 2169.8,1653.5 2169.8,1652.0 2166.0,1652.0 2166.0,1653.5 2162.2,1653.5 2162.2,1653.5 2158.5,1653.5 2158.5,1654.5 2154.8,1654.5 2154.8,1653.5 2151.0,1653.5 2151.0,1653.5 2147.2,1653.5 2147.2,1654.5 2143.5,1654.5 2143.5,1653.5 2139.8,1653.5 2139.8,1652.0 2136.0,1652.0 2136.0,1653.5 2132.2,1653.5 2132.2,1654.5 2128.5,1654.5 2128.5,1652.0 2124.8,1652.0 2124.8,1654.5 2121.0,1654.5 2121.0,1653.5 2117.2,1653.5 2117.2,1652.0 2113.5,1652.0 2113.5,1653.5 2109.8,1653.5 2109.8,1653.5 2106.0,1653.5 2106.0,1653.5 2102.2,1653.5 2102.2,1653.5 2098.5,1653.5 2098.5,1653.5 2094.8,1653.5 2094.8,1653.5 2091.0,1653.5 2091.0,1652.0 2087.2,1652.0 2087.2,1653.5 2083.5,1653.5 2083.5,1654.5 2079.8,1654.5 2079.8,1654.5 2076.0,1654.5 2076.0,1652.0 2072.2,1652.0 2072.2,1653.5 2068.5,1653.5 2068.5,1654.5 2064.8,1654.5 2064.8,1654.5 2061.0,1654.5 2061.0,1653.5 2057.2,1653.5 2057.2,1652.0 2053.5,1652.0 2053.5,1654.5 2049.8,1654.5 2049.8,1653.5 2046.0,1653.5 2046.0,1653.5 2042.2,1653.5 2042.2,1653.5 2038.5,1653.5 2038.5,1653.5 2034.8,1653.5 2034.8,1654.5 2031.0,1654.5 2031.0,1653.5 2027.2,1653.5 2027.2,1653.5 2023.5,1653.5 2023.5,1653.5 2019.8,1653.5 2019.8,1653.5 2016.0,1653.5 2016.0,1653.5 2012.2,1653.5 2012.2,1653.5 2008.5,1653.5 2008.5,1652.0 2004.8,1652.0 2004.8,1653.5 2001.0,1653.5 2001.0,1653.5 1997.2,1653.5 1997.2,1653.5 1993.5,1653.5 1993.5,1653.5 1989.8,1653.5 1989.8,1654.5 1986.0,1654.5 1986.0,1653.5 1982.2,1653.5 1982.2,1653.5 1978.5,1653.5 1978.5,1653.5 1974.8,1653.5 1974.8,1653.5 1971.0,1653.5 1971.0,1653.5 1967.2,1653.5 1967.2,1654.5 1963.5,1654.5 1963.5,1653.5 1959.8,1653.5 1959.8,1653.5 1956.0,1653.5 1956.0,1653.5 1952.2,1653.5 1952.2,1653.5 1948.5,1653.5 1948.5,1653.5 1944.8,1653.5 1944.8,1653.5 1941.0,1653.5 1941.0,1654.5 1937.2,1654.5 1937.2,1652.0 1933.5,1652.0 1933.5,1653.5 1929.8,1653.5 1929.8,1652.0 1926.0,1652.0 1926.0,1654.5 1922.2,1654.5 1922.2,1653.5 1918.5,1653.5 1918.5,1654.5 1914.8,1654.5 1914.8,1654.5 1911.0,1654.5 1911.0,1653.5 1907.2,1653.5 1907.2,1652.0 1903.5,1652.0 1903.5,1654.5 1899.8,1654.5 1899.8,1653.5 1896.0,1653.5 1896.0,1653.5 1892.2,1653.5 1892.2,1653.5 1888.5,1653.5 1888.5,1653.5 1884.8,1653.5 1884.8,1654.5 1881.0,1654.5 1881.0,1654.5 1877.2,1654.5 1877.2,1653.5 1873.5,1653.5 1873.5,1653.5 1869.8,1653.5 1869.8,1654.5 1866.0,1654.5 1866.0,1652.0 1862.2,1652.0 1862.2,1653.5 1858.5,1653.5 1858.5,1652.0 1854.8,1652.0 1854.8,1654.5 1851.0,1654.5 1851.0,1652.0 1847.2,1652.0 1847.2,1654.5 1843.5,1654.5 1843.5,1653.5 1839.8,1653.5 1839.8,1653.5 1836.0,1653.5 1836.0,1653.5 1832.2,1653.5 1832.2,1653.5 1828.5,1653.5 1828.5,1654.5 1824.8,1654.5 1824.8,1654.5 1821.0,1654.5 1821.0,1653.5 1817.2,1653.5 1817.2,1653.5 1813.5,1653.5 1813.5,1653.5 1809.8,1653.5 1809.8,1653.5 1806.0,1653.5 1806.0,1654.5 1802.2,1654.5 1802.2,1653.5 1798.5,1653.5 1798.5,1653.5 1794.8,1653.5 1794.8,1654.5 1791.0,1654.5 1791.0,1653.5 1787.2,1653.5 1787.2,1652.0 1783.5,1652.0 1783.5,1653.5 1779.8,1653.5 1779.8,1653.5 1776.0,1653.5 1776.0,1653.5 1772.2,1653.5 1772.2,1652.0 1768.5,1652.0 1768.5,1653.5 1764.8,1653.5 1764.8,1653.5 1761.0,1653.5 1761.0,1654.5 1757.2,1654.5 1757.2,1653.5 1753.5,1653.5 1753.5,1652.0 1749.8,1652.0 1749.8,1653.5 1746.0,1653.5 1746.0,1654.5 1742.2,1654.5 1742.2,1653.5 1738.5,1653.5 1738.5,1652.0 1734.8,1652.0 1734.8,1654.5 1731.0,1654.5 1731.0,1653.5 1727.2,1653.5 1727.2,1653.5 1723.5,1653.5 1723.5,1653.5 1719.8,1653.5 1719.8,1652.0 1716.0,1652.0 1716.0,1653.5 1712.2,1653.5 1712.2,1652.0 1708.5,1652.0 1708.5,1653.5 1704.8,1653.5 1704.8,1653.5 1701.0,1653.5 1701.0,1653.5 1697.2,1653.5 1697.2,1653.5 1693.5,1653.5 1693.5,1653.5 1689.8,1653.5 1689.8,1654.5 1686.0,1654.5 1686.0,1653.5 1682.2,1653.5 1682.2,1653.5 1678.5,1653.5 1678.5,1653.5 1674.8,1653.5 1674.8,1653.5 1671.0,1653.5 1671.0,1653.5 1667.2,1653.5 1667.2,1653.5 1663.5,1653.5 1663.5,1653.5 1659.8,1653.5 1659.8,1652.0 1656.0,1652.0 1656.0,1653.5 1652.2,1653.5 1652.2,1652.0 1648.5,1652.0 1648.5,1653.5 1644.8,1653.5 1644.8,1652.0 1641.0,1652.0 1641.0,1653.5 1637.2,1653.5 1637.2,1653.5 1633.5,1653.5 1633.5,1654.5 1629.8,1654.5 1629.8,1654.5 1626.0,1654.5 1626.0,1652.0 1622.2,1652.0 1622.2,1653.5 1618.5,1653.5 1618.5,1653.5 1614.8,1653.5 1614.8,1652.0 1611.0,1652.0 1611.0,1653.5 1607.2,1653.5 1607.2,1653.5 1603.5,1653.5 1603.5,1652.0 1599.8,1652.0 1599.8,1653.5 1596.0,1653.5 1596.0,1653.5 1592.2,1653.5 1592.2,1652.0 1588.5,1652.0 1588.5,1652.0 1584.8,1652.0 1584.8,1652.0 1581.0,1652.0 1581.0,1653.5 1577.2,1653.5 1577.2,1653.5 1573.5,1653.5 1573.5,1652.0 1569.8,1652.0 1569.8,1654.5 1566.0,1654.5 1566.0,1653.5 1562.2,1653.5 1562.2,1653.5 1558.5,1653.5 1558.5,1653.5 1554.8,1653.5 1554.8,1653.5 1551.0,1653.5 1551.0,1653.5 1547.2,1653.5 1547.2,1653.5 1543.5,1653.5 1543.5,1653.5 1539.8,1653.5 1539.8,1653.5 1536.0,1653.5 1536.0,1653.5 1532.2,1653.5 1532.2,1654.5 1528.5,1654.5 1528.5,1653.5 1524.8,1653.5 1524.8,1653.5 1521.0,1653.5 1521.0,1653.5 1517.2,1653.5 1517.2,1653.5 1513.5,1653.5 1513.5,1653.5 1509.8,1653.5 1509.8,1652.0 1506.0,1652.0 1506.0,1654.5 1502.2,1654.5 1502.2,1654.5 1498.5,1654.5 1498.5,1652.0 1494.8,1652.0 1494.8,1652.0 1491.0,1652.0 1491.0,1653.5 1487.2,1653.5 1487.2,1652.0 1483.5,1652.0 1483.5,1653.5 1479.8,1653.5 1479.8,1653.5 1476.0,1653.5 1476.0,1654.5 1472.2,1654.5 1472.2,1653.5 1468.5,1653.5 1468.5,1653.5 1464.8,1653.5 1464.8,1654.5 1461.0,1654.5 1461.0,1653.5 1457.2,1653.5 1457.2,1653.5 1453.5,1653.5 1453.5,1654.5 1449.8,1654.5 1449.8,1653.5 1446.0,1653.5 1446.0,1652.0 1442.2,1652.0 1442.2,1652.0 1438.5,1652.0 1438.5,1653.5 1434.8,1653.5 1434.8,1654.5 1431.0,1654.5 1431.0,1652.0 1427.2,1652.0 1427.2,1654.5 1423.5,1654.5 1423.5,1653.5 1419.8,1653.5 1419.8,1654.5 1416.0,1654.5 1416.0,1654.5 1412.2,1654.5 1412.2,1652.0 1408.5,1652.0 1408.5,1652.0 1404.8,1652.0 1404.8,1653.5 1401.0,1653.5 1401.0,1653.5 1397.2,1653.5 1397.2,1653.5 1393.5,1653.5 1393.5,1653.5 1389.8,1653.5 1389.8,1653.5 1386.0,1653.5 1386.0,1652.0 1382.2,1652.0 1382.2,1652.0 1378.5,1652.0 1378.5,1653.5 1374.8,1653.5 1374.8,1652.0 1371.0,1652.0 1371.0,1653.5 1367.2,1653.5 1367.2,1653.5 1363.5,1653.5 1363.5,1653.5 1359.8,1653.5 1359.8,1653.5 1356.0,1653.5 1356.0,1653.5 1352.2,1653.5 1352.2,1654.5 1348.5,1654.5 1348.5,1652.0 1344.8,1652.0 1344.8,1653.5 1341.0,1653.5 1341.0,1654.5 1337.2,1654.5 1337.2,1653.5 1333.5,1653.5 1333.5,1652.0 1329.8,1652.0 1329.8,1652.0 1326.0,1652.0 1326.0,1654.5 1322.2,1654.5 1322.2,1653.5 1318.5,1653.5 1318.5,1653.5 1314.8,1653.5 1314.8,1653.5 1311.0,1653.5 1311.0,1653.5 1307.2,1653.5 1307.2,1653.5 1303.5,1653.5 1303.5,1653.5 1299.8,1653.5 1299.8,1653.5 1296.0,1653.5 1296.0,1654.5 1292.2,1654.5 1292.2,1653.5 1288.5,1653.5 1288.5,1653.5 1284.8,1653.5 1284.8,1653.5 1281.0,1653.5 1281.0,1654.5 1277.2,1654.5 1277.2,1653.5 1273.5,1653.5 1273.5,1653.5 1269.8,1653.5 1269.8,1652.0 1266.0,1652.0 1266.0,1653.5 1262.2,1653.5 1262.2,1654.5 1258.5,1654.5 1258.5,1652.0 1254.8,1652.0 1254.8,1653.5 1251.0,1653.5 1251.0,1654.5 1247.2,1654.5 1247.2,1653.5 1243.5,1653.5 1243.5,1654.5 1239.8,1654.5 1239.8,1653.5 1236.0,1653.5 1236.0,1653.5 1232.2,1653.5 1232.2,1653.5 1228.5,1653.5 1228.5,1653.5 1224.8,1653.5 1224.8,1653.5 1221.0,1653.5 1221.0,1653.5 1217.2,1653.5 1217.2,1653.5 1213.5,1653.5 1213.5,1653.5 1209.8,1653.5 1209.8,1652.0 1206.0,1652.0 1206.0,1653.5 1202.2,1653.5 1202.2,1653.5 1198.5,1653.5 1198.5,1653.5 1194.8,1653.5 1194.8,1654.5 1191.0,1654.5 1191.0,1653.5 1187.2,1653.5 1187.2,1653.5 1183.5,1653.5 1183.5,1653.5 1179.8,1653.5 1179.8,1652.0 1176.0,1652.0 1176.0,1653.5 1172.2,1653.5 1172.2,1654.5 1168.5,1654.5 1168.5,1653.5 1164.8,1653.5 1164.8,1653.5 1161.0,1653.5 1161.0,1654.5 1157.2,1654.5 1157.2,1653.5 1153.5,1653.5 1153.5,1653.5 1149.8,1653.5 1149.8,1653.5 1146.0,1653.5 1146.0,1653.5 1142.2,1653.5 1142.2,1652.0 1138.5,1652.0 1138.5,1653.5 1134.8,1653.5 1134.8,1653.5 1131.0,1653.5 1131.0,1653.5 1127.2,1653.5 1127.2,1653.5 1123.5,1653.5 1123.5,1653.5 1119.8,1653.5 1119.8,1653.5 1116.0,1653.5 1116.0,1653.5 1112.2,1653.5 1112.2,1652.0 1108.5,1652.0 1108.5,1654.5 1104.8,1654.5 1104.8,1654.5 1101.0,1654.5 1101.0,1653.5 1097.2,1653.5 1097.2,1653.5 1093.5,1653.5 1093.5,1653.5 1089.8,1653.5 1089.8,1653.5 1086.0,1653.5 1086.0,1653.5 1082.2,1653.5 1082.2,1653.5 1078.5,1653.5 1078.5,1653.5 1074.8,1653.5 1074.8,1653.5 1071.0,1653.5 1071.0,1653.5 1067.2,1653.5 1067.2,1653.5 1063.5,1653.5 1063.5,1653.5 1059.8,1653.5 1059.8,1653.5 1056.0,1653.5 1056.0,1652.0 1052.2,1652.0 1052.2,1654.5 1048.5,1654.5 1048.5,1653.5 1044.8,1653.5 1044.8,1653.5 1041.0,1653.5 1041.0,1653.5 1037.2,1653.5 1037.2,1653.5 1033.5,1653.5 1033.5,1653.5 1029.8,1653.5 1029.8,1653.5 1026.0,1653.5 1026.0,1653.5 1022.2,1653.5 1022.2,1653.5 1018.5,1653.5 1018.5,1653.5 1014.8,1653.5 1014.8,1652.0 1011.0,1652.0 1011.0,1653.5 1007.2,1653.5 1007.2,1653.5 1003.5,1653.5 1003.5,1652.0 999.8,1652.0 999.8,1652.0 996.0,1652.0 996.0,1653.5 992.2,1653.5 992.2,1654.5 988.5,1654.5 988.5,1653.5 984.8,1653.5 984.8,1652.0 981.0,1652.0 981.0,1653.5 977.2,1653.5 977.2,1654.5 973.5,1654.5 973.5,1652.0 969.8,1652.0 969.8,1652.0 966.0,1652.0 966.0,1652.0 962.2,1652.0 962.2,1653.5 958.5,1653.5 958.5,1653.5 954.8,1653.5 954.8,1653.5 951.0,1653.5 951.0,1653.5 947.2,1653.5 947.2,1653.5 943.5,1653.5 943.5,1653.5 939.8,1653.5 939.8,1653.5 936.0,1653.5 936.0,1653.5 932.2,1653.5 932.2,1654.5 928.5,1654.5 928.5,1653.5 924.8,1653.5 924.8,1653.5 921.0,1653.5 921.0,1652.0 917.2,1652.0 917.2,1652.0 913.5,1652.0 913.5,1654.5 909.8,1654.5 909.8,1654.5 906.0,1654.5 906.0,1652.0 902.2,1652.0 902.2,1653.5 898.5,1653.5 898.5,1653.5 894.8,1653.5 894.8,1653.5 891.0,1653.5 891.0,1654.5 887.2,1654.5 887.2,1654.5 883.5,1654.5 883.5,1653.5 879.8,1653.5 879.8,1653.5 876.0,1653.5 876.0,1652.0 872.2,1652.0 872.2,1654.5 868.5,1654.5 868.5,1653.5 864.8,1653.5 864.8,1653.5 861.0,1653.5 861.0,1653.5 857.2,1653.5 857.2,1652.0 853.5,1652.0 853.5,1654.5 849.8,1654.5 849.8,1653.5 846.0,1653.5 846.0,1653.5 842.2,1653.5 842.2,1653.5 838.5,1653.5 838.5,1653.5 834.8,1653.5 834.8,1654.5 831.0,1654.5 831.0,1652.0 827.2,1652.0 827.2,1653.5 823.5,1653.5 823.5,1653.5 819.8,1653.5 819.8,1653.5 816.0,1653.5 816.0,1653.5 812.2,1653.5 812.2,1654.5 808.5,1654.5 808.5,1653.5 804.8,1653.5 804.8,1653.5 801.0,1653.5 801.0,1652.0 797.2,1652.0 797.2,1653.5 793.5,1653.5 793.5,1653.5 789.8,1653.5 789.8,1653.5 786.0,1653.5 786.0,1654.5 782.2,1654.5 782.2,1654.5 778.5,1654.5 778.5,1653.5 774.8,1653.5 774.8,1653.5 771.0,1653.5 771.0,1654.5 767.2,1654.5 767.2,1654.5 763.5,1654.5 763.5,1653.5 759.8,1653.5 759.8,1654.5 756.0,1654.5 756.0,1653.5 752.2,1653.5 752.2,1653.5 748.5,1653.5 748.5,1653.5 744.8,1653.5 744.8,1654.5 741.0,1654.5 741.0,1653.5 737.2,1653.5 737.2,1654.5 733.5,1654.5 733.5,1653.5 729.8,1653.5 729.8,1652.0 726.0,1652.0 726.0,1653.5 722.2,1653.5 722.2,1653.5 718.5,1653.5 718.5,1653.5 714.8,1653.5 714.8,1653.5 711.0,1653.5 711.0,1653.5 707.2,1653.5 707.2,1653.5 703.5,1653.5 703.5,1654.5 699.8,1654.5 699.8,1653.5 696.0,1653.5 696.0,1653.5 692.2,1653.5 692.2,1654.5 688.5,1654.5 688.5,1653.5 684.8,1653.5 684.8,1654.5 681.0,1654.5 681.0,1653.5 677.2,1653.5 677.2,1654.5 673.5,1654.5 673.5,1653.5 669.8,1653.5 669.8,1653.5 666.0,1653.5 666.0,1652.0 662.2,1652.0 662.2,1653.5 658.5,1653.5 658.5,1654.5 654.8,1654.5 654.8,1653.5 651.0,1653.5 651.0,1653.5 647.2,1653.5 647.2,1654.5 643.5,1654.5 643.5,1653.5 639.8,1653.5 639.8,1654.5 636.0,1654.5 636.0,1652.0 632.2,1652.0 632.2,1653.5 628.5,1653.5 628.5,1653.5 624.8,1653.5 624.8,1654.5 621.0,1654.5 621.0,1654.5 617.2,1654.5 617.2,1653.5 613.5,1653.5 613.5,1653.5 609.8,1653.5 609.8,1654.5 606.0,1654.5 606.0,1653.5 602.2,1653.5 602.2,1653.5 598.5,1653.5 598.5,1653.5 594.8,1653.5 594.8,1653.5 591.0,1653.5 591.0,1654.5 587.2,1654.5 587.2,1653.5 583.5,1653.5 583.5,1653.5 579.8,1653.5 579.8,1652.0 576.0,1652.0 576.0,1652.0 572.2,1652.0 572.2,1653.5 568.5,1653.5 568.5,1653.5 564.8,1653.5 564.8,1653.5 561.0,1653.5 561.0,1653.5 557.2,1653.5 557.2,1653.5 553.5,1653.5 553.5,1654.5 549.8,1654.5 549.8,1654.5 546.0,1654.5 546.0,1653.5 542.2,1653.5 542.2,1653.5 538.5,1653.5 538.5,1653.5 534.8,1653.5 534.8,1653.5 531.0,1653.5 531.0,1653.5 527.2,1653.5 527.2,1653.5 523.5,1653.5 523.5,1654.5 519.8,1654.5 519.8,1653.5 516.0,1653.5 516.0,1653.5 512.2,1653.5 512.2,1653.5 508.5,1653.5 508.5,1654.5 504.8,1654.5 504.8,1653.5 501.0,1653.5 501.0,1653.5 497.2,1653.5 497.2,1653.5 493.5,1653.5 493.5,1653.5 489.8,1653.5 489.8,1654.5 486.0,1654.5 486.0,1653.5 482.2,1653.5 482.2,1652.0 478.5,1652.0 478.5,1653.5 474.8,1653.5 474.8,1654.5 471.0,1654.5 471.0,1653.5 467.2,1653.5 467.2,1653.5 463.5,1653.5 463.5,1653.5 459.8,1653.5 459.8,1653.5 456.0,1653.5 456.0,1653.5 452.2,1653.5 452.2,1654.5 448.5,1654.5 448.5,1653.5 444.8,1653.5 444.8,1653.5 441.0,1653.5 441.0,1652.0 437.2,1652.0 437.2,1654.5 433.5,1654.5 433.5,1653.5 429.8,1653.5 429.8,1654.5 426.0,1654.5 426.0,1652.0 422.2,1652.0 422.2,1653.5 418.5,1653.5 418.5,1653.5 414.8,1653.5 414.8,1653.5 411.0,1653.5 411.0,1653.5 407.2,1653.5 407.2,1652.0 403.5,1652.0 403.5,1653.5 399.8,1653.5 399.8,1652.0 396.0,1652.0 396.0,1653.5 392.2,1653.5 392.2,1654.5 388.5,1654.5 388.5,1654.5 384.8,1654.5 384.8,1653.5 381.0,1653.5 381.0,1654.5 377.2,1654.5 377.2,1654.5 373.5,1654.5 373.5,1652.0 369.8,1652.0 369.8,1654.5 366.0,1654.5 366.0,1654.5 362.2,1654.5 362.2,1653.5 358.5,1653.5 358.5,1653.5 354.8,1653.5 354.8,1652.0 351.0,1652.0 351.0,1653.5 347.2,1653.5 347.2,1653.5 343.5,1653.5 343.5,1652.0 339.8,1652.0 339.8,1652.0 336.0,1652.0" fill="#2ca298"/>
<rect x="335.8" y="1262.6" width="4.5" height="350.4" fill="#2ca298" opacity="0.75"/>
<path d="M340.4 1568.5h2.5v24.7h-2.5zM374.1 1306.2h2.5v125.3h-2.5zM385.4 1289.1h2.5v194.5h-2.5zM392.9 1379.6h2.5v111.5h-2.5zM445.4 1575.3h2.5v16.0h-2.5zM449.1 1495.1h2.5v94.4h-2.5zM467.9 1452.2h2.5v87.4h-2.5zM591.6 1544.1h2.5v46.3h-2.5zM677.9 1400.2h2.5v96.5h-2.5zM685.4 1393.6h2.5v96.2h-2.5zM689.1 1397.9h2.5v166.7h-2.5zM730.4 1578.3h2.5v28.0h-2.5zM737.9 1553.4h2.5v25.2h-2.5zM741.6 1548.6h2.5v31.6h-2.5zM771.6 1543.9h2.5v41.1h-2.5zM831.6 1472.8h2.5v76.9h-2.5zM869.1 1558.3h2.5v25.1h-2.5zM884.1 1558.7h2.5v35.2h-2.5zM899.1 1488.6h2.5v67.6h-2.5zM906.6 1578.7h2.5v12.3h-2.5zM959.1 1522.3h2.5v43.4h-2.5zM1000.4 1549.3h2.5v53.6h-2.5zM1056.6 1558.8h2.5v27.1h-2.5zM1101.6 1572.0h2.5v25.3h-2.5zM1127.8 1570.1h2.5v15.7h-2.5zM1191.6 1575.2h2.5v17.6h-2.5zM1206.6 1518.4h2.5v35.3h-2.5zM1229.1 1445.2h2.5v111.8h-2.5zM1277.8 1513.2h2.5v68.2h-2.5zM1360.3 1535.0h2.5v59.6h-2.5zM1382.8 1505.8h2.5v34.4h-2.5zM1427.8 1523.7h2.5v38.4h-2.5zM1472.8 1518.5h2.5v55.3h-2.5zM1476.6 1523.9h2.5v28.6h-2.5zM1502.8 1528.4h2.5v36.6h-2.5zM1521.6 1541.8h2.5v43.7h-2.5zM1581.6 1515.7h2.5v79.6h-2.5zM1585.3 1487.2h2.5v59.0h-2.5zM1589.1 1494.3h2.5v77.9h-2.5zM1619.1 1572.7h2.5v31.5h-2.5zM1622.8 1561.8h2.5v32.3h-2.5zM1739.1 1472.1h2.5v75.4h-2.5zM1765.3 1564.6h2.5v27.4h-2.5zM1795.3 1575.7h2.5v22.4h-2.5zM1877.8 1547.3h2.5v29.2h-2.5zM1881.6 1487.2h2.5v39.6h-2.5zM1889.1 1448.8h2.5v77.9h-2.5zM1892.8 1459.0h2.5v70.9h-2.5zM1915.3 1553.3h2.5v46.9h-2.5zM1930.3 1524.0h2.5v44.3h-2.5zM1975.3 1531.2h2.5v53.7h-2.5zM1982.8 1507.0h2.5v64.9h-2.5zM2061.6 1563.4h2.5v15.1h-2.5zM2147.8 1441.7h2.5v138.3h-2.5zM2151.6 1466.8h2.5v107.9h-2.5zM2155.3 1477.3h2.5v95.3h-2.5zM2166.6 1558.6h2.5v22.0h-2.5zM2196.6 1565.5h2.5v14.5h-2.5zM2219.1 1527.4h2.5v38.1h-2.5zM2237.8 1356.4h2.5v180.1h-2.5zM2241.6 1358.5h2.5v206.8h-2.5zM2249.1 1442.4h2.5v84.0h-2.5zM2286.6 1508.9h2.5v56.8h-2.5zM2290.3 1514.7h2.5v48.0h-2.5zM2309.1 1508.5h2.5v87.7h-2.5zM2335.3 1476.7h2.5v76.0h-2.5zM2342.8 1505.0h2.5v82.6h-2.5zM2432.8 1501.7h2.5v38.4h-2.5zM2436.6 1502.3h2.5v34.2h-2.5zM2455.3 1577.2h2.5v12.6h-2.5zM2481.6 1557.0h2.5v27.8h-2.5zM2485.3 1533.8h2.5v53.3h-2.5zM2519.1 1573.5h2.5v19.3h-2.5zM2526.6 1493.3h2.5v96.1h-2.5zM2530.3 1375.2h2.5v190.2h-2.5zM2594.1 1388.8h2.5v156.1h-2.5zM2609.1 1431.4h2.5v141.0h-2.5zM2635.3 1517.6h2.5v68.1h-2.5zM2669.1 1568.0h2.5v34.2h-2.5zM2672.8 1526.6h2.5v42.6h-2.5zM2687.8 1361.2h2.5v133.8h-2.5zM2714.1 1536.5h2.5v58.4h-2.5zM2717.8 1543.4h2.5v36.3h-2.5zM2736.6 1529.7h2.5v46.7h-2.5zM2781.6 1432.8h2.5v136.3h-2.5zM2785.3 1428.2h2.5v73.6h-2.5zM2834.1 1433.4h2.5v70.4h-2.5zM2845.3 1360.9h2.5v111.0h-2.5zM2852.8 1383.6h2.5v123.9h-2.5zM2856.6 1559.0h2.5v25.4h-2.5zM2879.1 1558.0h2.5v27.8h-2.5zM2912.8 1500.8h2.5v34.0h-2.5zM2920.3 1531.0h2.5v37.8h-2.5zM2942.8 1523.1h2.5v58.4h-2.5z" fill="#fff" opacity="0.9"/><rect x="332.0" y="104" width="3.6" height="600" fill="#858585"/><rect x="332.0" y="1153" width="3.6" height="599" fill="#858585"/><text x="314" y="124.9" text-anchor="end" font-size="45.5" fill="#141414">400</text><text x="314" y="210.2" text-anchor="end" font-size="45.5" fill="#141414">300</text><text x="314" y="295.5" text-anchor="end" font-size="45.5" fill="#141414">200</text><text x="314" y="380.8" text-anchor="end" font-size="45.5" fill="#141414">100</text><text x="314" y="466.1" text-anchor="end" font-size="45.5" fill="#141414">0</text><text x="314" y="551.3" text-anchor="end" font-size="45.5" fill="#141414">-100</text><text x="314" y="636.6" text-anchor="end" font-size="45.5" fill="#141414">-200</text><text x="314" y="721.9" text-anchor="end" font-size="45.5" fill="#141414">-300</text><text x="314" y="1170.5" text-anchor="end" font-size="45.5" fill="#141414">120</text><text x="314" y="1270.1" text-anchor="end" font-size="45.5" fill="#141414">100</text><text x="314" y="1369.8" text-anchor="end" font-size="45.5" fill="#141414">80</text><text x="314" y="1469.4" text-anchor="end" font-size="45.5" fill="#141414">60</text><text x="314" y="1569.0" text-anchor="end" font-size="45.5" fill="#141414">40</text><text x="314" y="1668.6" text-anchor="end" font-size="45.5" fill="#141414">20</text><text x="314" y="1768.3" text-anchor="end" font-size="45.5" fill="#141414">0</text><rect x="332" y="711.6" width="2621" height="3.4" fill="#eef0f2"/><rect x="332" y="715" width="2621" height="66" fill="#778898"/><rect x="332" y="780.8" width="2621" height="3" fill="#8597a7"/><rect x="332" y="715" width="12" height="68.8" fill="#000"/><rect x="2942" y="715" width="11" height="68.8" fill="#000"/><rect x="332" y="788.4" width="2621" height="3.5" fill="#f0f0f0"/><rect x="332" y="791.9" width="2621" height="3" fill="#8c8c8c"/><rect x="332" y="1761" width="2621" height="72.7" fill="#bcc4ce"/><rect x="332" y="1765" width="2621" height="64.8" fill="#778898"/><rect x="332" y="1761" width="12" height="72.7" fill="#777"/><rect x="2942" y="1761" width="11" height="72.7" fill="#777"/><rect x="332" y="1765" width="12" height="64.8" fill="#000"/><rect x="2942" y="1765" width="11" height="64.8" fill="#000"/><rect x="332" y="1837.8" width="2621" height="7" fill="#c0c0c0"/><text transform="translate(352.6,834) rotate(-56)" text-anchor="end" font-size="42" letter-spacing="2" fill="#141414">Jan 1</text><text transform="translate(441.5,834) rotate(-56)" text-anchor="end" font-size="42" letter-spacing="2" fill="#141414">Jan 13</text><text transform="translate(530.0,834) rotate(-56)" text-anchor="end" font-size="42" letter-spacing="2" fill="#141414">Jan 25</text><text transform="translate(614.0,834) rotate(-56)" text-anchor="end" font-size="42" letter-spacing="2" fill="#141414">Feb 6</text><text transform="translate(702.0,834) rotate(-56)" text-anchor="end" font-size="42" letter-spacing="2" fill="#141414">Feb 18</text><text transform="translate(790.0,834) rotate(-56)" text-anchor="end" font-size="42" letter-spacing="2" fill="#141414">Mar 2</text><text transform="translate(878.5,834) rotate(-56)" text-anchor="end" font-size="42" letter-spacing="2" fill="#141414">Mar 14</text><text transform="translate(966.5,834) rotate(-56)" text-anchor="end" font-size="42" letter-spacing="2" fill="#141414">Mar 27</text><text transform="translate(1051.3,834) rotate(-56)" text-anchor="end" font-size="42" letter-spacing="2" fill="#141414">Apr 8</text><text transform="translate(1138.9,834) rotate(-56)" text-anchor="end" font-size="42" letter-spacing="2" fill="#141414">Apr 20</text><text transform="translate(1226.9,834) rotate(-56)" text-anchor="end" font-size="42" letter-spacing="2" fill="#141414">May 2</text><text transform="translate(1314.9,834) rotate(-56)" text-anchor="end" font-size="42" letter-spacing="2" fill="#141414">May 14</text><text transform="translate(1403.4,834) rotate(-56)" text-anchor="end" font-size="42" letter-spacing="2" fill="#141414">May 26</text><text transform="translate(1487.4,834) rotate(-56)" text-anchor="end" font-size="42" letter-spacing="2" fill="#141414">Jun 8</text><text transform="translate(1575.4,834) rotate(-56)" text-anchor="end" font-size="42" letter-spacing="2" fill="#141414">Jun 20</text><text transform="translate(1662.4,834) rotate(-56)" text-anchor="end" font-size="42" letter-spacing="2" fill="#141414">Jul 2</text><text transform="translate(1751.8,834) rotate(-56)" text-anchor="end" font-size="42" letter-spacing="2" fill="#141414">Jul 14</text><text transform="translate(1840.2,834) rotate(-56)" text-anchor="end" font-size="42" letter-spacing="2" fill="#141414">Jul 26</text><text transform="translate(1923.8,834) rotate(-56)" text-anchor="end" font-size="42" letter-spacing="2" fill="#141414">Aug 7</text><text transform="translate(2011.8,834) rotate(-56)" text-anchor="end" font-size="42" letter-spacing="2" fill="#141414">Aug 20</text><text transform="translate(2100.3,834) rotate(-56)" text-anchor="end" font-size="42" letter-spacing="2" fill="#141414">Sep 1</text><text transform="translate(2188.3,834) rotate(-56)" text-anchor="end" font-size="42" letter-spacing="2" fill="#141414">Sep 13</text><text transform="translate(2276.8,834) rotate(-56)" text-anchor="end" font-size="42" letter-spacing="2" fill="#141414">Sep 25</text><text transform="translate(2360.7,834) rotate(-56)" text-anchor="end" font-size="42" letter-spacing="2" fill="#141414">Oct 7</text><text transform="translate(2448.7,834) rotate(-56)" text-anchor="end" font-size="42" letter-spacing="2" fill="#141414">Oct 19</text><text transform="translate(2536.7,834) rotate(-56)" text-anchor="end" font-size="42" letter-spacing="2" fill="#141414">Nov 1</text><text transform="translate(2625.2,834) rotate(-56)" text-anchor="end" font-size="42" letter-spacing="2" fill="#141414">Nov 13</text><text transform="translate(2713.7,834) rotate(-56)" text-anchor="end" font-size="42" letter-spacing="2" fill="#141414">Nov 25</text><text transform="translate(2797.7,834) rotate(-56)" text-anchor="end" font-size="42" letter-spacing="2" fill="#141414">Dec 7</text><text transform="translate(2885.7,834) rotate(-56)" text-anchor="end" font-size="42" letter-spacing="2" fill="#141414">Dec 19</text><text transform="translate(2970.1,834) rotate(-56)" text-anchor="end" font-size="42" letter-spacing="2" fill="#141414">Dec 31</text><text transform="translate(352.6,1881) rotate(-56)" text-anchor="end" font-size="42" letter-spacing="2" fill="#141414">Jan 1</text><text transform="translate(441.5,1881) rotate(-56)" text-anchor="end" font-size="42" letter-spacing="2" fill="#141414">Jan 13</text><text transform="translate(530.0,1881) rotate(-56)" text-anchor="end" font-size="42" letter-spacing="2" fill="#141414">Jan 25</text><text transform="translate(614.0,1881) rotate(-56)" text-anchor="end" font-size="42" letter-spacing="2" fill="#141414">Feb 6</text><text transform="translate(702.0,1881) rotate(-56)" text-anchor="end" font-size="42" letter-spacing="2" fill="#141414">Feb 18</text><text transform="translate(790.0,1881) rotate(-56)" text-anchor="end" font-size="42" letter-spacing="2" fill="#141414">Mar 2</text><text transform="translate(878.5,1881) rotate(-56)" text-anchor="end" font-size="42" letter-spacing="2" fill="#141414">Mar 14</text><text transform="translate(966.5,1881) rotate(-56)" text-anchor="end" font-size="42" letter-spacing="2" fill="#141414">Mar 27</text><text transform="translate(1051.3,1881) rotate(-56)" text-anchor="end" font-size="42" letter-spacing="2" fill="#141414">Apr 8</text><text transform="translate(1138.9,1881) rotate(-56)" text-anchor="end" font-size="42" letter-spacing="2" fill="#141414">Apr 20</text><text transform="translate(1226.9,1881) rotate(-56)" text-anchor="end" font-size="42" letter-spacing="2" fill="#141414">May 2</text><text transform="translate(1314.9,1881) rotate(-56)" text-anchor="end" font-size="42" letter-spacing="2" fill="#141414">May 14</text><text transform="translate(1403.4,1881) rotate(-56)" text-anchor="end" font-size="42" letter-spacing="2" fill="#141414">May 26</text><text transform="translate(1487.4,1881) rotate(-56)" text-anchor="end" font-size="42" letter-spacing="2" fill="#141414">Jun 8</text><text transform="translate(1575.4,1881) rotate(-56)" text-anchor="end" font-size="42" letter-spacing="2" fill="#141414">Jun 20</text><text transform="translate(1662.4,1881) rotate(-56)" text-anchor="end" font-size="42" letter-spacing="2" fill="#141414">Jul 2</text><text transform="translate(1751.8,1881) rotate(-56)" text-anchor="end" font-size="42" letter-spacing="2" fill="#141414">Jul 14</text><text transform="translate(1840.2,1881) rotate(-56)" text-anchor="end" font-size="42" letter-spacing="2" fill="#141414">Jul 26</text><text transform="translate(1923.8,1881) rotate(-56)" text-anchor="end" font-size="42" letter-spacing="2" fill="#141414">Aug 7</text><text transform="translate(2011.8,1881) rotate(-56)" text-anchor="end" font-size="42" letter-spacing="2" fill="#141414">Aug 20</text><text transform="translate(2100.3,1881) rotate(-56)" text-anchor="end" font-size="42" letter-spacing="2" fill="#141414">Sep 1</text><text transform="translate(2188.3,1881) rotate(-56)" text-anchor="end" font-size="42" letter-spacing="2" fill="#141414">Sep 13</text><text transform="translate(2276.8,1881) rotate(-56)" text-anchor="end" font-size="42" letter-spacing="2" fill="#141414">Sep 25</text><text transform="translate(2360.7,1881) rotate(-56)" text-anchor="end" font-size="42" letter-spacing="2" fill="#141414">Oct 7</text><text transform="translate(2448.7,1881) rotate(-56)" text-anchor="end" font-size="42" letter-spacing="2" fill="#141414">Oct 19</text><text transform="translate(2536.7,1881) rotate(-56)" text-anchor="end" font-size="42" letter-spacing="2" fill="#141414">Nov 1</text><text transform="translate(2625.2,1881) rotate(-56)" text-anchor="end" font-size="42" letter-spacing="2" fill="#141414">Nov 13</text><text transform="translate(2713.7,1881) rotate(-56)" text-anchor="end" font-size="42" letter-spacing="2" fill="#141414">Nov 25</text><text transform="translate(2797.7,1881) rotate(-56)" text-anchor="end" font-size="42" letter-spacing="2" fill="#141414">Dec 7</text><text transform="translate(2885.7,1881) rotate(-56)" text-anchor="end" font-size="42" letter-spacing="2" fill="#141414">Dec 19</text><text transform="translate(2970.1,1881) rotate(-56)" text-anchor="end" font-size="42" letter-spacing="2" fill="#141414">Dec 31</text><text transform="translate(104,432) rotate(-90) scale(0.95,1)" font-size="44" fill="#141414">kW</text><clipPath id="ttl"><rect x="0" y="1124" width="300" height="800"/></clipPath><g clip-path="url(#ttl)"><text transform="translate(104,1884) rotate(-90) scale(0.965,1)" font-size="44" fill="#141414">NEC DSS 170kWh 369kW State of Charge</text></g></svg>

<div class="abs" style="left:2980px;top:52px;width:19px;height:2004px;background:#dadada"></div>
<div class="abs" style="left:2999px;top:926px;width:954px;height:19px;background:#dadada"></div>
<div class="abs" style="left:3893px;top:945px;width:60px;height:1001px;background:#f0f0f0"></div>
<div class="abs" style="left:3893px;top:1506px;width:60px;height:182px;background:#c8c8c8"></div>
<div class="abs" style="left:2999px;top:1953px;width:954px;height:4px;background:#a0a0a0"></div>
<svg class="abs" style="left:3907px;top:962px" width="36" height="30"><path d="M4 26 L17.5 5 L31 26" stroke="#9a9a9a" stroke-width="3" fill="none"/></svg>
<svg class="abs" style="left:3907px;top:1903px" width="36" height="30"><path d="M4 5 L17.5 25 L31 5" stroke="#9a9a9a" stroke-width="3" fill="none"/></svg>
<div class="btn" style="left:2371px;width:145px"></div>
<div class="btn" style="left:2525px;width:143px"></div>
<div class="btn" style="left:2677px;width:145px"></div>
<div class="btn" style="left:2831px;width:144px"></div>
<div class="t b" style="left:3016px;top:40px;font-size:44.5px">Upper Plot:</div>
<div class="sw" style="left:3026px;top:106px;background:#002060"></div>
<div class="t" style="left:3093px;top:109px">AC Primary Load Served</div>
<div class="sw" style="left:3026px;top:186px;background:#b58900"></div>
<div class="abs" style="left:3093px;top:189px;width:839px;height:70px;overflow:hidden"><div class="t" style="left:0;top:0;letter-spacing:0.45px">Schneider ConextCoreXC 630kW with Gen</div></div>
<div class="sw" style="left:3026px;top:266px;background:#92d050"></div>
<div class="t" style="left:3093px;top:270px">NEC DSS 170kWh 369kW Input Power</div>
<div class="t b" style="left:3016px;top:339px;font-size:44.5px">Lower Plot:</div>
<div class="sw" style="left:3026px;top:405px;background:#2ca298"></div>
<div class="t" style="left:3093px;top:408px">NEC DSS 170kWh 369kW State of Charge</div>
<div class="abs" style="left:2999px;top:945px;width:894px;height:1001px;overflow:hidden">
 <div class="t b" style="left:23px;top:-6px;font-size:44.5px">Storage</div>
 <div class="swo" style="left:81px;top:47px"><i style="background:#2ca298"></i></div>
<div class="cb" style="left:158px;top:51px"></div>
<div class="cb" style="left:242px;top:51px"><svg width="53" height="50" style="position:absolute;left:-4px;top:-4px;z-index:2"><path d="M19 31 L27.5 42 L44.5 18" stroke="#1f3050" stroke-width="5.5" fill="none" stroke-linecap="butt"/></svg></div>
<div class="t" style="left:328px;top:53px;line-height:58px">NEC DSS 170kWh 369kW<br>State of Charge</div>
<div class="swo" style="left:81px;top:170px"><i style="background:#92d050"></i></div>
<div class="cb" style="left:158px;top:174px"><svg width="53" height="50" style="position:absolute;left:-4px;top:-4px;z-index:2"><path d="M19 31 L27.5 42 L44.5 18" stroke="#1f3050" stroke-width="5.5" fill="none" stroke-linecap="butt"/></svg></div>
<div class="cb" style="left:242px;top:174px"></div>
<div class="t" style="left:328px;top:176px;line-height:58px">NEC DSS 170kWh 369kW<br>Input Power</div>
<div class="swo" style="left:85px;top:373px"><i style="background:#d92b2b"></i></div>
<div class="cb" style="left:162px;top:377px"></div>
<div class="cb" style="left:246px;top:377px"></div>
<div class="t" style="left:332px;top:379px;line-height:58px">NEC DSS 170kWh 369kW<br>Maximum Charge Power</div>
<div class="swo" style="left:85px;top:497px"><i style="background:#8a9a00"></i></div>
<div class="cb" style="left:162px;top:501px"></div>
<div class="cb" style="left:246px;top:501px"></div>
<div class="t" style="left:332px;top:503px;line-height:58px">NEC DSS 170kWh 369kW<br>Maximum Discharge<br>Power</div>
<div class="swo" style="left:85px;top:676px"><i style="background:#2a8ad6"></i></div>
<div class="cb" style="left:162px;top:680px"></div>
<div class="cb" style="left:246px;top:680px"></div>
<div class="t" style="left:332px;top:682px;line-height:58px">NEC DSS 170kWh 369kW<br>Charge Power</div>
<div class="swo" style="left:85px;top:800px"><i style="background:#c84b17"></i></div>
<div class="cb" style="left:162px;top:804px"></div>
<div class="cb" style="left:246px;top:804px"></div>
<div class="t" style="left:332px;top:806px;line-height:58px">NEC DSS 170kWh 369kW<br>Discharge Power</div>
<div class="swo" style="left:85px;top:924px"><i style="background:#d4337f"></i></div>
<div class="cb" style="left:162px;top:928px"></div>
<div class="cb" style="left:246px;top:928px"></div>
<div class="t" style="left:332px;top:930px;line-height:58px">NEC DSS 170kWh 369kW<br>Discharge Energy</div>
<div class="abs" style="left:88px;top:298px;width:73px;height:73px;box-sizing:border-box;border:3.8px solid #4a4a4a;border-radius:50%"></div>
<svg class="abs" style="left:88px;top:298px" width="73" height="73"><path d="M23 44 L36.5 30 L50 44" stroke="#2a2a2a" stroke-width="5" fill="none"/></svg>
<div class="t" style="left:179px;top:310px;font-style:italic;font-size:40px;transform:scaleX(0.895);transform-origin:0 0">See Less</div>
</div>
<div class="t" style="left:3111px;top:1986px;font-size:42.5px;letter-spacing:1.4px">You are viewing plot:&nbsp; Solar+Storage</div>

<div class="frame"></div>
</body></html>
